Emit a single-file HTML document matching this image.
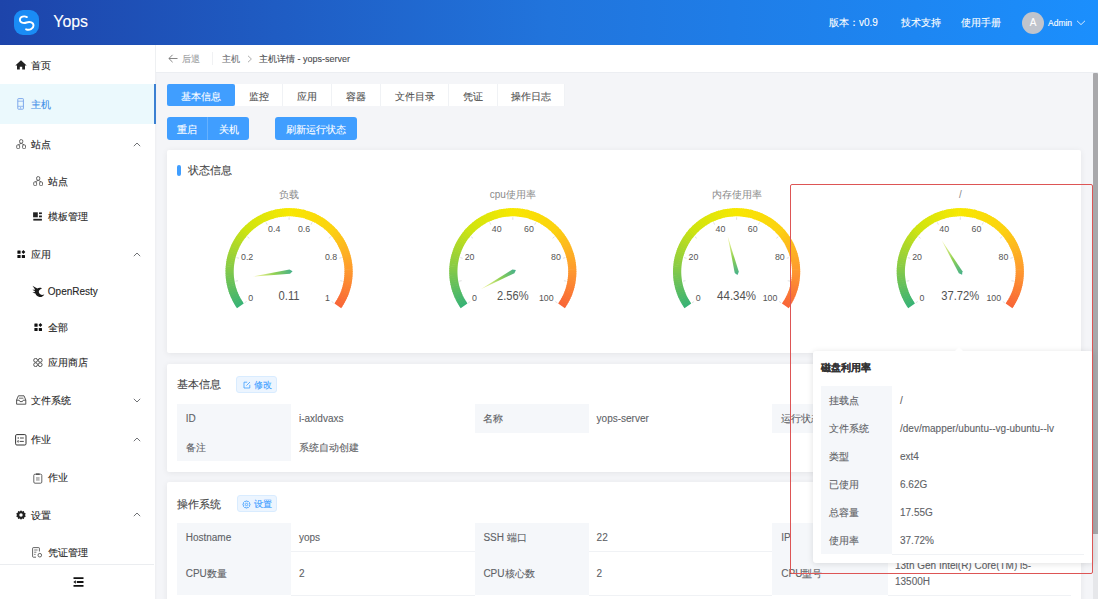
<!DOCTYPE html>
<html><head><meta charset="utf-8">
<style>
*{box-sizing:border-box;margin:0;padding:0}
html,body{width:1098px;height:599px;overflow:hidden}
body{position:relative;background:#f4f5f8;font-family:"Liberation Sans",sans-serif;color:#333;font-size:10px;-webkit-text-stroke-width:0.1px}
.abs{position:absolute;white-space:nowrap;line-height:1}
#hdr{position:absolute;left:0;top:0;width:1098px;height:44.8px;background:linear-gradient(90deg,#1d44aa 0%,#2174dc 50%,#1b8ffd 100%)}
#logo{position:absolute;left:14.25px;top:9.5px;width:24.5px;height:25.5px;border-radius:9px;background:#1a8cf5}
#side{position:absolute;left:0;top:44.8px;width:155.2px;height:555px;background:#fff;box-shadow:1px 0 2px rgba(0,0,0,0.03)}
.mi{position:absolute;left:0;width:154px;font-size:10.5px;color:#303133}
.mi span{position:absolute;white-space:nowrap;line-height:1}
#crumb{position:absolute;left:155.2px;top:44.8px;width:943px;height:28.2px;background:#fff;border-bottom:1px solid #eceef2;border-left:1px solid #eef0f2}
.card{position:absolute;left:167px;width:914px;background:#fff;border-radius:2px;box-shadow:0 1px 6px rgba(0,0,0,0.07)}
.gsvg{position:absolute;left:0;top:0;-webkit-text-stroke-width:0}
.gl{font-size:9.8px;fill:#555;font-family:"Liberation Sans",sans-serif}
.gv{font-size:12.5px;fill:#525252;font-family:"Liberation Sans",sans-serif}
.gt{font-size:10px;fill:#8a8a8a;font-family:"Liberation Sans",sans-serif}
.tab{position:absolute;top:84px;height:22px;background:#fff;color:#505050;font-size:10px;text-align:center;line-height:22px;padding-top:1.5px;border-right:1px solid #f0f2f5}
.btn{position:absolute;top:117px;height:22.5px;background:#409eff;color:#fff;font-size:10px;text-align:center;line-height:22.5px;padding-top:1.5px}
.tbl{position:absolute;border-collapse:collapse;font-size:10px;color:#555}
.lab{background:#f5f7fa}
.sbtn{position:absolute;height:17px;background:#ecf5ff;border:1px solid #d9ecff;color:#409eff;border-radius:3px;font-size:9px;line-height:15px;text-align:center}
</style></head><body>
<div id="hdr">
  <div id="logo"><svg width="25" height="25" viewBox="0 0 25 25"><path d="M12.9 7.1C10.4 5.6 6 6.4 5.9 9.6C5.8 12.6 9.4 13.6 12.6 12.5C15.8 11.4 19.6 12.4 19.5 15.6C19.4 18.8 15.4 20.6 12.1 19.3" stroke="#fff" stroke-width="1.9" fill="none" stroke-linecap="round"/></svg></div>
  <div class="abs" style="left:53.3px;top:14.2px;font-size:15.9px;color:#fff">Yops</div>
  <div class="abs" style="left:829px;top:17.8px;font-size:10px;color:#fff">版本：v0.9</div>
  <div class="abs" style="left:901px;top:17.8px;font-size:10px;color:#fff">技术支持</div>
  <div class="abs" style="left:961px;top:17.8px;font-size:10px;color:#fff">使用手册</div>
  <div style="position:absolute;left:1022px;top:11.5px;width:22px;height:22px;border-radius:50%;background:#c0c4cc;color:#fff;font-size:10px;text-align:center;line-height:22px">A</div>
  <div class="abs" style="left:1048px;top:18.5px;font-size:8.5px;color:#fff">Admin</div>
  <svg style="position:absolute;left:1076px;top:19px" width="11" height="8" viewBox="0 0 11 8"><path d="M1 1.8L5 5.6L9 1.8" stroke="#fff" stroke-width="0.8" fill="none"/></svg>
</div>

<div id="side">
<div style="position:absolute;left:0;top:39.2px;width:155px;height:40px;background:#ebf9fd"></div>
<div style="position:absolute;left:153.5px;top:39.2px;width:2px;height:40px;background:#3b80d2;z-index:2"></div>
<svg style="position:absolute;left:15px;top:15.200000000000003px" width="12" height="10" viewBox="0 0 12 10"><path d="M6 0.3L0.3 5.6H2V9.6H4.8V6.8H7.2V9.6H10V5.6H11.7Z" fill="#222"/></svg>
<div class="abs" style="left:30.5px;top:16.50px;font-size:10px;color:#262626;">首页</div>
<svg style="position:absolute;left:16.5px;top:53.2px" width="8" height="12" viewBox="0 0 8 12"><rect x="0.8" y="0.6" width="5.6" height="10.6" rx="0.6" stroke="#7ea8ec" stroke-width="1" fill="none"/><line x1="0.8" y1="3.2" x2="6.4" y2="3.2" stroke="#7ea8ec" stroke-width="0.8"/><line x1="0.8" y1="8.3" x2="6.4" y2="8.3" stroke="#7ea8ec" stroke-width="0.8"/><line x1="3.6" y1="9" x2="3.6" y2="10.6" stroke="#7ea8ec" stroke-width="0.8"/></svg>
<div class="abs" style="left:30.5px;top:55.50px;font-size:10px;color:#3f8ee8;">主机</div>
<svg style="position:absolute;left:15.5px;top:94.2px" width="10" height="10" viewBox="0 0 10 10"><g stroke="#505050" stroke-width="0.85" fill="none"><rect x="3.6" y="0.6" width="3.2" height="3.7" rx="1.4"/><rect x="0.7" y="5.9" width="2.9" height="3.7" rx="0.9"/><rect x="6.6" y="5.9" width="2.9" height="3.7" rx="0.9"/><path d="M5.2 4.3L2.2 5.9M5.2 4.3L8.1 5.9"/></g></svg>
<div class="abs" style="left:30.5px;top:95.00px;font-size:10px;color:#262626;">站点</div>
<svg style="position:absolute;left:133px;top:97.0px" width="8" height="5" viewBox="0 0 8 5"><path d="M0.8 4.2L4 1L7.2 4.2" stroke="#606266" stroke-width="0.9" fill="none"/></svg>
<svg style="position:absolute;left:32.5px;top:131.7px" width="10" height="10" viewBox="0 0 10 10"><g stroke="#505050" stroke-width="0.85" fill="none"><rect x="3.6" y="0.6" width="3.2" height="3.7" rx="1.4"/><rect x="0.7" y="5.9" width="2.9" height="3.7" rx="0.9"/><rect x="6.6" y="5.9" width="2.9" height="3.7" rx="0.9"/><path d="M5.2 4.3L2.2 5.9M5.2 4.3L8.1 5.9"/></g></svg>
<div class="abs" style="left:47.5px;top:132.50px;font-size:10px;color:#262626;">站点</div>
<svg style="position:absolute;left:33px;top:167.7px" width="10" height="10" viewBox="0 0 10 10"><rect x="0.1" y="0.3" width="4.7" height="5" fill="#222"/><rect x="6" y="0.4" width="2.9" height="1.7" fill="#222"/><rect x="6" y="3.5" width="2.9" height="1.8" fill="#222"/><rect x="0.3" y="6.8" width="8.6" height="1.8" fill="#222"/></svg>
<div class="abs" style="left:47.5px;top:167.50px;font-size:10px;color:#262626;">模板管理</div>
<svg style="position:absolute;left:16.5px;top:205.2px" width="9" height="9" viewBox="0 0 9 9"><rect x="0.4" y="0.5" width="3.2" height="3.2" rx="0.5" fill="#111"/><path d="M6.4 0.1L8.3 2.1L6.4 4.1L4.5 2.1Z" fill="#111"/><rect x="0.4" y="4.9" width="3.2" height="3.2" rx="0.5" fill="#111"/><rect x="4.8" y="4.9" width="3.2" height="3.2" rx="0.5" fill="#111"/></svg>
<div class="abs" style="left:30.5px;top:205.50px;font-size:10px;color:#262626;">应用</div>
<svg style="position:absolute;left:133px;top:207.0px" width="8" height="5" viewBox="0 0 8 5"><path d="M0.8 4.2L4 1L7.2 4.2" stroke="#606266" stroke-width="0.9" fill="none"/></svg>
<svg style="position:absolute;left:31.5px;top:240.7px" width="13" height="13" viewBox="0 0 13 13"><path d="M0.5 0.8C2.5 2 3.6 2.6 5.2 3.4C6.6 2.8 8.6 2.6 10 3.4C8.4 3.8 7 5 6.8 6.6C6.7 8.4 8.2 9.8 10 10C11 10 11.8 9.6 12.3 9.2C11.6 11.2 9.6 12.2 7.6 12C5.4 11.7 4 10.2 3.4 8.6C2.4 8.4 1.4 8 0.4 7.6C1.4 7.4 2.2 7.2 2.9 7C2.8 6.6 2.8 6.3 2.9 5.9C2 5.7 1.2 5.3 0.4 4.8C1.4 4.8 2.3 4.8 3.2 4.8C2.4 3.6 1.4 2.3 0.5 0.8Z" fill="#1a1a1a"/></svg>
<div class="abs" style="left:47.8px;top:242.50px;font-size:10px;color:#262626;">OpenResty</div>
<svg style="position:absolute;left:33.5px;top:278.4px" width="9" height="9" viewBox="0 0 9 9"><rect x="0.4" y="0.5" width="3.2" height="3.2" rx="0.5" fill="#111"/><path d="M6.4 0.1L8.3 2.1L6.4 4.1L4.5 2.1Z" fill="#111"/><rect x="0.4" y="4.9" width="3.2" height="3.2" rx="0.5" fill="#111"/><rect x="4.8" y="4.9" width="3.2" height="3.2" rx="0.5" fill="#111"/></svg>
<div class="abs" style="left:47.5px;top:278.00px;font-size:10px;color:#262626;">全部</div>
<svg style="position:absolute;left:32.5px;top:313.2px" width="10" height="9" viewBox="0 0 10 9"><circle cx="2.6" cy="2.3" r="1.9" stroke="#444" stroke-width="0.9" fill="none"/><circle cx="7.2" cy="2.3" r="1.9" stroke="#444" stroke-width="0.9" fill="none"/><circle cx="2.6" cy="6.7" r="1.9" stroke="#444" stroke-width="0.9" fill="none"/><circle cx="7.2" cy="6.7" r="1.9" stroke="#444" stroke-width="0.9" fill="none"/></svg>
<div class="abs" style="left:47.5px;top:313.00px;font-size:10px;color:#262626;">应用商店</div>
<svg style="position:absolute;left:15.5px;top:350.7px" width="11" height="10" viewBox="0 0 11 10"><path d="M0.6 5V9.2H9.8V5L8 0.8H2.4Z" stroke="#444" stroke-width="0.9" fill="none"/><path d="M0.6 5.2H3.2L4 6.6H6.4L7.2 5.2H9.8" stroke="#444" stroke-width="0.9" fill="none"/><path d="M3 3.2H7.4" stroke="#444" stroke-width="0.8"/></svg>
<div class="abs" style="left:30.5px;top:351.00px;font-size:10px;color:#262626;">文件系统</div>
<svg style="position:absolute;left:133px;top:353.7px" width="8" height="5" viewBox="0 0 8 5"><path d="M0.8 0.8L4 4L7.2 0.8" stroke="#606266" stroke-width="0.9" fill="none"/></svg>
<svg style="position:absolute;left:14.5px;top:389.5px" width="12" height="12" viewBox="0 0 12 12"><rect x="0.6" y="0.6" width="10.4" height="10.4" rx="1.2" stroke="#333" stroke-width="1" fill="none"/><circle cx="3.2" cy="4" r="0.7" fill="#333"/><circle cx="3.2" cy="7.4" r="0.8" stroke="#333" stroke-width="0.7" fill="none"/><path d="M5 4H8.8M5 7.4H8.8" stroke="#333" stroke-width="0.9"/></svg>
<div class="abs" style="left:30.5px;top:390.50px;font-size:10px;color:#262626;">作业</div>
<svg style="position:absolute;left:133px;top:392.0px" width="8" height="5" viewBox="0 0 8 5"><path d="M0.8 4.2L4 1L7.2 4.2" stroke="#606266" stroke-width="0.9" fill="none"/></svg>
<svg style="position:absolute;left:32.5px;top:428.2px" width="10" height="11" viewBox="0 0 10 11"><rect x="0.8" y="1.2" width="8" height="9" rx="1.2" stroke="#555" stroke-width="0.9" fill="none"/><rect x="3" y="0.4" width="3.6" height="1.6" fill="#555"/><rect x="3" y="4" width="3.6" height="3.8" fill="#bbb"/></svg>
<div class="abs" style="left:47.5px;top:428.50px;font-size:10px;color:#262626;">作业</div>
<svg style="position:absolute;left:15.5px;top:465.7px" width="10" height="10" viewBox="0 0 10 10"><path d="M5 0.2L6.2 1.4L7.9 1L8.3 2.7L9.8 3.6L9 5L9.8 6.4L8.3 7.3L7.9 9L6.2 8.6L5 9.8L3.8 8.6L2.1 9L1.7 7.3L0.2 6.4L1 5L0.2 3.6L1.7 2.7L2.1 1L3.8 1.4Z" fill="#222"/><circle cx="5" cy="5" r="1.7" fill="#fff"/></svg>
<div class="abs" style="left:30.5px;top:466.00px;font-size:10px;color:#262626;">设置</div>
<svg style="position:absolute;left:133px;top:467.5px" width="8" height="5" viewBox="0 0 8 5"><path d="M0.8 4.2L4 1L7.2 4.2" stroke="#606266" stroke-width="0.9" fill="none"/></svg>
<svg style="position:absolute;left:32px;top:502.2px" width="11" height="11" viewBox="0 0 11 11"><path d="M7.4 4.5V1.2C7.4 0.9 7.2 0.6 6.8 0.6H1.2C0.9 0.6 0.6 0.9 0.6 1.2V9.6C0.6 9.9 0.9 10.2 1.2 10.2H4" stroke="#555" stroke-width="0.9" fill="none"/><path d="M2.2 3H5.6M2.2 5.2H4.4M2.2 7.4H3.6" stroke="#555" stroke-width="0.8"/><circle cx="7.8" cy="8.2" r="1.8" stroke="#555" stroke-width="0.9" fill="none"/></svg>
<div class="abs" style="left:47.5px;top:503.00px;font-size:10px;color:#262626;">凭证管理</div>
<div style="position:absolute;left:0;top:519.2px;width:154px;height:1px;background:#ebedf0"></div>
<svg style="position:absolute;left:72.5px;top:532.4000000000001px" width="11" height="10" viewBox="0 0 11 10"><path d="M0.5 1.1H10.5M3.8 5H10.5M0.5 8.9H10.5" stroke="#111" stroke-width="1.9"/><path d="M0.3 5L2.8 3.2V6.8Z" fill="#111"/></svg>
</div>

<div id="crumb"></div>
<svg style="position:absolute;left:168px;top:54.2px" width="10" height="9" viewBox="0 0 10 9"><path d="M9.5 4.5H1M4.6 0.8L0.9 4.5L4.6 8.2" stroke="#808080" stroke-width="0.95" fill="none"/></svg>
<div class="abs" style="left:181.5px;top:54.70px;font-size:9px;color:#9a9ca0">后退</div>
<div style="position:absolute;left:211.5px;top:52px;width:1px;height:13px;background:#f0f1f3"></div>
<div class="abs" style="left:221.5px;top:54.70px;font-size:9px;color:#707276">主机</div>
<svg style="position:absolute;left:246.8px;top:55px" width="6" height="8" viewBox="0 0 6 8"><path d="M1 0.8L4.4 4L1 7.2" stroke="#999" stroke-width="0.8" fill="none"/></svg>
<div class="abs" style="left:259px;top:54.70px;font-size:9px;color:#4a4c50">主机详情 - yops-server</div>

<div class="tab" style="left:167px;width:68px;background:#409eff;color:#fff;border-right:none;border-radius:2px">基本信息</div>
<div class="tab" style="left:235px;width:48px;">监控</div>
<div class="tab" style="left:283px;width:49px;">应用</div>
<div class="tab" style="left:332px;width:49px;">容器</div>
<div class="tab" style="left:381px;width:68px;">文件目录</div>
<div class="tab" style="left:449px;width:49px;">凭证</div>
<div class="tab" style="left:498px;width:67px;">操作日志</div>
<div class="btn" style="left:166.5px;width:40.5px;border-radius:3px 0 0 3px">重启</div>
<div style="position:absolute;left:207px;top:117px;width:1px;height:22.5px;background:#66b1ff"></div>
<div class="btn" style="left:208px;width:41px;border-radius:0 3px 3px 0">关机</div>
<div class="btn" style="left:275px;width:81.5px;border-radius:3px">刷新运行状态</div>

<div class="card" style="top:149.8px;height:202.8px"></div>
<div class="card" style="top:363.8px;height:108.2px"></div>
<div class="card" style="top:482.3px;height:130px"></div>

<svg class="gsvg" width="1098" height="599" viewBox="0 0 1098 599"><path d="M240.36 305.83A59.5 59.5 0 0 1 238.82 303.51" stroke="#39b375" stroke-width="8.2" fill="none"/>
<path d="M239.15 304.03A59.5 59.5 0 0 1 237.69 301.66" stroke="#3eb472" stroke-width="8.2" fill="none"/>
<path d="M238.01 302.20A59.5 59.5 0 0 1 236.64 299.77" stroke="#42b570" stroke-width="8.2" fill="none"/>
<path d="M236.93 300.32A59.5 59.5 0 0 1 235.65 297.85" stroke="#46b76d" stroke-width="8.2" fill="none"/>
<path d="M235.93 298.40A59.5 59.5 0 0 1 234.74 295.89" stroke="#4bb86b" stroke-width="8.2" fill="none"/>
<path d="M234.99 296.45A59.5 59.5 0 0 1 233.89 293.89" stroke="#4fb968" stroke-width="8.2" fill="none"/>
<path d="M234.13 294.47A59.5 59.5 0 0 1 233.12 291.87" stroke="#53bb66" stroke-width="8.2" fill="none"/>
<path d="M233.34 292.46A59.5 59.5 0 0 1 232.43 289.82" stroke="#58bc63" stroke-width="8.2" fill="none"/>
<path d="M232.62 290.42A59.5 59.5 0 0 1 231.81 287.75" stroke="#5cbd61" stroke-width="8.2" fill="none"/>
<path d="M231.98 288.35A59.5 59.5 0 0 1 231.26 285.66" stroke="#60be5e" stroke-width="8.2" fill="none"/>
<path d="M231.41 286.26A59.5 59.5 0 0 1 230.79 283.55" stroke="#65c05c" stroke-width="8.2" fill="none"/>
<path d="M230.92 284.16A59.5 59.5 0 0 1 230.40 281.42" stroke="#69c159" stroke-width="8.2" fill="none"/>
<path d="M230.50 282.03A59.5 59.5 0 0 1 230.08 279.28" stroke="#6dc257" stroke-width="8.2" fill="none"/>
<path d="M230.17 279.90A59.5 59.5 0 0 1 229.85 277.13" stroke="#72c454" stroke-width="8.2" fill="none"/>
<path d="M229.91 277.75A59.5 59.5 0 0 1 229.69 274.97" stroke="#76c552" stroke-width="8.2" fill="none"/>
<path d="M229.73 275.59A59.5 59.5 0 0 1 229.61 272.81" stroke="#7ac64f" stroke-width="8.2" fill="none"/>
<path d="M229.63 273.43A59.5 59.5 0 0 1 229.61 270.64" stroke="#7fc84d" stroke-width="8.2" fill="none"/>
<path d="M229.60 271.27A59.5 59.5 0 0 1 229.69 268.48" stroke="#83c94a" stroke-width="8.2" fill="none"/>
<path d="M229.66 269.10A59.5 59.5 0 0 1 229.84 266.32" stroke="#86ca47" stroke-width="8.2" fill="none"/>
<path d="M229.79 266.95A59.5 59.5 0 0 1 230.08 264.17" stroke="#8acc44" stroke-width="8.2" fill="none"/>
<path d="M230.00 264.79A59.5 59.5 0 0 1 230.39 262.03" stroke="#8ecd42" stroke-width="8.2" fill="none"/>
<path d="M230.29 262.65A59.5 59.5 0 0 1 230.78 259.91" stroke="#91ce3f" stroke-width="8.2" fill="none"/>
<path d="M230.66 260.52A59.5 59.5 0 0 1 231.25 257.79" stroke="#95cf3c" stroke-width="8.2" fill="none"/>
<path d="M231.11 258.40A59.5 59.5 0 0 1 231.79 255.70" stroke="#99d139" stroke-width="8.2" fill="none"/>
<path d="M231.63 256.30A59.5 59.5 0 0 1 232.41 253.63" stroke="#9cd236" stroke-width="8.2" fill="none"/>
<path d="M232.23 254.22A59.5 59.5 0 0 1 233.11 251.58" stroke="#a0d333" stroke-width="8.2" fill="none"/>
<path d="M232.90 252.17A59.5 59.5 0 0 1 233.87 249.56" stroke="#a3d531" stroke-width="8.2" fill="none"/>
<path d="M233.65 250.13A59.5 59.5 0 0 1 234.72 247.56" stroke="#a7d62e" stroke-width="8.2" fill="none"/>
<path d="M234.47 248.13A59.5 59.5 0 0 1 235.63 245.60" stroke="#abd72b" stroke-width="8.2" fill="none"/>
<path d="M235.36 246.16A59.5 59.5 0 0 1 236.61 243.67" stroke="#aed828" stroke-width="8.2" fill="none"/>
<path d="M236.32 244.23A59.5 59.5 0 0 1 237.67 241.79" stroke="#b2da25" stroke-width="8.2" fill="none"/>
<path d="M237.36 242.33A59.5 59.5 0 0 1 238.79 239.94" stroke="#b6db22" stroke-width="8.2" fill="none"/>
<path d="M238.46 240.46A59.5 59.5 0 0 1 239.98 238.13" stroke="#b9dc20" stroke-width="8.2" fill="none"/>
<path d="M239.63 238.64A59.5 59.5 0 0 1 241.23 236.36" stroke="#bdde1d" stroke-width="8.2" fill="none"/>
<path d="M240.86 236.87A59.5 59.5 0 0 1 242.55 234.65" stroke="#c1df1a" stroke-width="8.2" fill="none"/>
<path d="M242.16 235.14A59.5 59.5 0 0 1 243.92 232.98" stroke="#c4e017" stroke-width="8.2" fill="none"/>
<path d="M243.52 233.45A59.5 59.5 0 0 1 245.36 231.36" stroke="#c8e214" stroke-width="8.2" fill="none"/>
<path d="M244.94 231.82A59.5 59.5 0 0 1 246.86 229.80" stroke="#cce312" stroke-width="8.2" fill="none"/>
<path d="M246.42 230.24A59.5 59.5 0 0 1 248.41 228.29" stroke="#cfe40f" stroke-width="8.2" fill="none"/>
<path d="M247.95 228.72A59.5 59.5 0 0 1 250.01 226.84" stroke="#d1e40e" stroke-width="8.2" fill="none"/>
<path d="M249.54 227.25A59.5 59.5 0 0 1 251.67 225.45" stroke="#d3e40e" stroke-width="8.2" fill="none"/>
<path d="M251.19 225.84A59.5 59.5 0 0 1 253.37 224.12" stroke="#d5e50d" stroke-width="8.2" fill="none"/>
<path d="M252.88 224.50A59.5 59.5 0 0 1 255.13 222.85" stroke="#d7e50c" stroke-width="8.2" fill="none"/>
<path d="M254.62 223.21A59.5 59.5 0 0 1 256.93 221.65" stroke="#d9e50b" stroke-width="8.2" fill="none"/>
<path d="M256.40 221.99A59.5 59.5 0 0 1 258.77 220.51" stroke="#dbe50b" stroke-width="8.2" fill="none"/>
<path d="M258.23 220.83A59.5 59.5 0 0 1 260.65 219.44" stroke="#dce50a" stroke-width="8.2" fill="none"/>
<path d="M260.10 219.74A59.5 59.5 0 0 1 262.57 218.44" stroke="#dee609" stroke-width="8.2" fill="none"/>
<path d="M262.01 218.72A59.5 59.5 0 0 1 264.52 217.51" stroke="#e0e609" stroke-width="8.2" fill="none"/>
<path d="M263.95 217.77A59.5 59.5 0 0 1 266.51 216.66" stroke="#e2e608" stroke-width="8.2" fill="none"/>
<path d="M265.93 216.90A59.5 59.5 0 0 1 268.52 215.87" stroke="#e4e607" stroke-width="8.2" fill="none"/>
<path d="M267.94 216.09A59.5 59.5 0 0 1 270.57 215.16" stroke="#e6e607" stroke-width="8.2" fill="none"/>
<path d="M269.97 215.36A59.5 59.5 0 0 1 272.63 214.52" stroke="#e8e606" stroke-width="8.2" fill="none"/>
<path d="M272.04 214.70A59.5 59.5 0 0 1 274.72 213.96" stroke="#eae705" stroke-width="8.2" fill="none"/>
<path d="M274.12 214.12A59.5 59.5 0 0 1 276.83 213.48" stroke="#ece705" stroke-width="8.2" fill="none"/>
<path d="M276.22 213.61A59.5 59.5 0 0 1 278.96 213.07" stroke="#eee704" stroke-width="8.2" fill="none"/>
<path d="M278.34 213.18A59.5 59.5 0 0 1 281.09 212.74" stroke="#efe703" stroke-width="8.2" fill="none"/>
<path d="M280.48 212.83A59.5 59.5 0 0 1 283.24 212.49" stroke="#f1e702" stroke-width="8.2" fill="none"/>
<path d="M282.62 212.55A59.5 59.5 0 0 1 285.40 212.32" stroke="#f3e802" stroke-width="8.2" fill="none"/>
<path d="M284.78 212.36A59.5 59.5 0 0 1 287.56 212.22" stroke="#f5e801" stroke-width="8.2" fill="none"/>
<path d="M286.94 212.24A59.5 59.5 0 0 1 289.72 212.20" stroke="#f7e800" stroke-width="8.2" fill="none"/>
<path d="M289.10 212.20A59.5 59.5 0 0 1 291.89 212.27" stroke="#f8e700" stroke-width="8.2" fill="none"/>
<path d="M291.26 212.24A59.5 59.5 0 0 1 294.04 212.41" stroke="#f8e601" stroke-width="8.2" fill="none"/>
<path d="M293.42 212.36A59.5 59.5 0 0 1 296.20 212.62" stroke="#f8e502" stroke-width="8.2" fill="none"/>
<path d="M295.58 212.55A59.5 59.5 0 0 1 298.34 212.92" stroke="#f9e403" stroke-width="8.2" fill="none"/>
<path d="M297.72 212.83A59.5 59.5 0 0 1 300.47 213.30" stroke="#f9e303" stroke-width="8.2" fill="none"/>
<path d="M299.86 213.18A59.5 59.5 0 0 1 302.59 213.75" stroke="#f9e204" stroke-width="8.2" fill="none"/>
<path d="M301.98 213.61A59.5 59.5 0 0 1 304.68 214.28" stroke="#f9e105" stroke-width="8.2" fill="none"/>
<path d="M304.08 214.12A59.5 59.5 0 0 1 306.76 214.88" stroke="#f9e006" stroke-width="8.2" fill="none"/>
<path d="M306.16 214.70A59.5 59.5 0 0 1 308.81 215.56" stroke="#fadf06" stroke-width="8.2" fill="none"/>
<path d="M308.23 215.36A59.5 59.5 0 0 1 310.84 216.31" stroke="#fade07" stroke-width="8.2" fill="none"/>
<path d="M310.26 216.09A59.5 59.5 0 0 1 312.84 217.14" stroke="#fadd08" stroke-width="8.2" fill="none"/>
<path d="M312.27 216.90A59.5 59.5 0 0 1 314.81 218.04" stroke="#fadc09" stroke-width="8.2" fill="none"/>
<path d="M314.25 217.77A59.5 59.5 0 0 1 316.74 219.01" stroke="#fadb09" stroke-width="8.2" fill="none"/>
<path d="M316.19 218.72A59.5 59.5 0 0 1 318.64 220.05" stroke="#fada0a" stroke-width="8.2" fill="none"/>
<path d="M318.10 219.74A59.5 59.5 0 0 1 320.50 221.16" stroke="#fbd90b" stroke-width="8.2" fill="none"/>
<path d="M319.97 220.83A59.5 59.5 0 0 1 322.31 222.33" stroke="#fbd80b" stroke-width="8.2" fill="none"/>
<path d="M321.80 221.99A59.5 59.5 0 0 1 324.09 223.57" stroke="#fbd70c" stroke-width="8.2" fill="none"/>
<path d="M323.58 223.21A59.5 59.5 0 0 1 325.81 224.88" stroke="#fbd60d" stroke-width="8.2" fill="none"/>
<path d="M325.32 224.50A59.5 59.5 0 0 1 327.49 226.24" stroke="#fbd50e" stroke-width="8.2" fill="none"/>
<path d="M327.01 225.84A59.5 59.5 0 0 1 329.12 227.67" stroke="#fcd40e" stroke-width="8.2" fill="none"/>
<path d="M328.66 227.25A59.5 59.5 0 0 1 330.69 229.15" stroke="#fcd30f" stroke-width="8.2" fill="none"/>
<path d="M330.25 228.72A59.5 59.5 0 0 1 332.21 230.69" stroke="#fcd210" stroke-width="8.2" fill="none"/>
<path d="M331.78 230.24A59.5 59.5 0 0 1 333.67 232.29" stroke="#fcd011" stroke-width="8.2" fill="none"/>
<path d="M333.26 231.82A59.5 59.5 0 0 1 335.08 233.93" stroke="#fccd13" stroke-width="8.2" fill="none"/>
<path d="M334.68 233.45A59.5 59.5 0 0 1 336.42 235.63" stroke="#fcca14" stroke-width="8.2" fill="none"/>
<path d="M336.04 235.14A59.5 59.5 0 0 1 337.70 237.37" stroke="#fcc816" stroke-width="8.2" fill="none"/>
<path d="M337.34 236.87A59.5 59.5 0 0 1 338.92 239.16" stroke="#fcc517" stroke-width="8.2" fill="none"/>
<path d="M338.57 238.64A59.5 59.5 0 0 1 340.07 241.00" stroke="#fdc219" stroke-width="8.2" fill="none"/>
<path d="M339.74 240.46A59.5 59.5 0 0 1 341.15 242.87" stroke="#fdbf1a" stroke-width="8.2" fill="none"/>
<path d="M340.84 242.33A59.5 59.5 0 0 1 342.16 244.78" stroke="#fdbd1c" stroke-width="8.2" fill="none"/>
<path d="M341.88 244.23A59.5 59.5 0 0 1 343.11 246.73" stroke="#fdba1d" stroke-width="8.2" fill="none"/>
<path d="M342.84 246.16A59.5 59.5 0 0 1 343.98 248.71" stroke="#fdb71f" stroke-width="8.2" fill="none"/>
<path d="M343.73 248.13A59.5 59.5 0 0 1 344.78 250.72" stroke="#fdb520" stroke-width="8.2" fill="none"/>
<path d="M344.55 250.13A59.5 59.5 0 0 1 345.50 252.75" stroke="#fdb222" stroke-width="8.2" fill="none"/>
<path d="M345.30 252.17A59.5 59.5 0 0 1 346.15 254.82" stroke="#fdaf23" stroke-width="8.2" fill="none"/>
<path d="M345.97 254.22A59.5 59.5 0 0 1 346.73 256.90" stroke="#fdad25" stroke-width="8.2" fill="none"/>
<path d="M346.57 256.30A59.5 59.5 0 0 1 347.23 259.01" stroke="#fdaa26" stroke-width="8.2" fill="none"/>
<path d="M347.09 258.40A59.5 59.5 0 0 1 347.65 261.13" stroke="#fda728" stroke-width="8.2" fill="none"/>
<path d="M347.54 260.52A59.5 59.5 0 0 1 348.00 263.26" stroke="#fea529" stroke-width="8.2" fill="none"/>
<path d="M347.91 262.65A59.5 59.5 0 0 1 348.27 265.41" stroke="#fea22b" stroke-width="8.2" fill="none"/>
<path d="M348.20 264.79A59.5 59.5 0 0 1 348.46 267.57" stroke="#fe9f2c" stroke-width="8.2" fill="none"/>
<path d="M348.41 266.95A59.5 59.5 0 0 1 348.57 269.73" stroke="#fe9d2d" stroke-width="8.2" fill="none"/>
<path d="M348.54 269.10A59.5 59.5 0 0 1 348.60 271.89" stroke="#fe9a2f" stroke-width="8.2" fill="none"/>
<path d="M348.60 271.27A59.5 59.5 0 0 1 348.55 274.05" stroke="#fe9730" stroke-width="8.2" fill="none"/>
<path d="M348.57 273.43A59.5 59.5 0 0 1 348.43 276.21" stroke="#fe9431" stroke-width="8.2" fill="none"/>
<path d="M348.47 275.59A59.5 59.5 0 0 1 348.23 278.37" stroke="#fd9131" stroke-width="8.2" fill="none"/>
<path d="M348.29 277.75A59.5 59.5 0 0 1 347.94 280.51" stroke="#fd8e31" stroke-width="8.2" fill="none"/>
<path d="M348.03 279.90A59.5 59.5 0 0 1 347.58 282.65" stroke="#fc8b32" stroke-width="8.2" fill="none"/>
<path d="M347.70 282.03A59.5 59.5 0 0 1 347.15 284.76" stroke="#fc8832" stroke-width="8.2" fill="none"/>
<path d="M347.28 284.16A59.5 59.5 0 0 1 346.63 286.87" stroke="#fc8433" stroke-width="8.2" fill="none"/>
<path d="M346.79 286.26A59.5 59.5 0 0 1 346.05 288.95" stroke="#fb8133" stroke-width="8.2" fill="none"/>
<path d="M346.22 288.35A59.5 59.5 0 0 1 345.38 291.01" stroke="#fb7e33" stroke-width="8.2" fill="none"/>
<path d="M345.58 290.42A59.5 59.5 0 0 1 344.64 293.04" stroke="#fb7b34" stroke-width="8.2" fill="none"/>
<path d="M344.86 292.46A59.5 59.5 0 0 1 343.83 295.04" stroke="#fa7834" stroke-width="8.2" fill="none"/>
<path d="M344.07 294.47A59.5 59.5 0 0 1 342.94 297.02" stroke="#fa7535" stroke-width="8.2" fill="none"/>
<path d="M343.21 296.45A59.5 59.5 0 0 1 341.99 298.96" stroke="#fa7235" stroke-width="8.2" fill="none"/>
<path d="M342.27 298.40A59.5 59.5 0 0 1 340.96 300.86" stroke="#f96f36" stroke-width="8.2" fill="none"/>
<path d="M341.27 300.32A59.5 59.5 0 0 1 339.87 302.73" stroke="#f96c36" stroke-width="8.2" fill="none"/>
<path d="M340.19 302.20A59.5 59.5 0 0 1 338.71 304.55" stroke="#f96936" stroke-width="8.2" fill="none"/>
<path d="M339.05 304.03A59.5 59.5 0 0 1 337.84 305.83" stroke="#f86637" stroke-width="8.2" fill="none"/>
<line x1="244.54" y1="302.90" x2="246.59" y2="301.47" stroke="#d8d8d8" stroke-width="0.8"/>
<line x1="235.53" y1="281.15" x2="237.99" y2="280.71" stroke="#d8d8d8" stroke-width="0.8"/>
<line x1="236.55" y1="257.62" x2="238.97" y2="258.27" stroke="#d8d8d8" stroke-width="0.8"/>
<line x1="247.43" y1="236.73" x2="249.34" y2="238.34" stroke="#d8d8d8" stroke-width="0.8"/>
<line x1="266.11" y1="222.40" x2="267.17" y2="224.66" stroke="#d8d8d8" stroke-width="0.8"/>
<line x1="289.10" y1="217.30" x2="289.10" y2="219.80" stroke="#d8d8d8" stroke-width="0.8"/>
<line x1="312.09" y1="222.40" x2="311.03" y2="224.66" stroke="#d8d8d8" stroke-width="0.8"/>
<line x1="330.77" y1="236.73" x2="328.86" y2="238.34" stroke="#d8d8d8" stroke-width="0.8"/>
<line x1="341.65" y1="257.62" x2="339.23" y2="258.27" stroke="#d8d8d8" stroke-width="0.8"/>
<line x1="342.67" y1="281.15" x2="340.21" y2="280.71" stroke="#d8d8d8" stroke-width="0.8"/>
<line x1="333.66" y1="302.90" x2="331.61" y2="301.47" stroke="#d8d8d8" stroke-width="0.8"/>
<text transform="translate(248.31,297.96) scale(0.9,1)" x="0" y="0" text-anchor="start" dominant-baseline="central" class="gl">0</text>
<text transform="translate(241.00,256.71) scale(0.9,1)" x="0" y="0" text-anchor="start" dominant-baseline="central" class="gl">0.2</text>
<text transform="translate(268.05,225.17) scale(0.9,1)" x="0" y="0" text-anchor="start" dominant-baseline="hanging" class="gl">0.4</text>
<text transform="translate(310.15,225.17) scale(0.9,1)" x="0" y="0" text-anchor="end" dominant-baseline="hanging" class="gl">0.6</text>
<text transform="translate(337.20,256.71) scale(0.9,1)" x="0" y="0" text-anchor="end" dominant-baseline="central" class="gl">0.8</text>
<text transform="translate(329.89,297.96) scale(0.9,1)" x="0" y="0" text-anchor="end" dominant-baseline="central" class="gl">1</text>
<defs><linearGradient id="pg1" gradientUnits="userSpaceOnUse" x1="252.91" y1="276.46" x2="292.57" y2="271.24"><stop offset="0" stop-color="#e4ea50" stop-opacity="0.5"/><stop offset="0.55" stop-color="#8fd052"/><stop offset="1" stop-color="#45b08c"/></linearGradient></defs>
<path d="M252.91 276.46L289.52 269.53L292.57 271.24L290.07 273.69Z" fill="url(#pg1)"/>
<text x="289.10" y="295.80" text-anchor="middle" dominant-baseline="central" class="gv" textLength="21" lengthAdjust="spacingAndGlyphs">0.11</text>
<text x="289.10" y="194.70" text-anchor="middle" dominant-baseline="central" class="gt">负载</text>
<path d="M464.06 305.83A59.5 59.5 0 0 1 462.52 303.51" stroke="#39b375" stroke-width="8.2" fill="none"/>
<path d="M462.85 304.03A59.5 59.5 0 0 1 461.39 301.66" stroke="#3eb472" stroke-width="8.2" fill="none"/>
<path d="M461.71 302.20A59.5 59.5 0 0 1 460.34 299.77" stroke="#42b570" stroke-width="8.2" fill="none"/>
<path d="M460.63 300.32A59.5 59.5 0 0 1 459.35 297.85" stroke="#46b76d" stroke-width="8.2" fill="none"/>
<path d="M459.63 298.40A59.5 59.5 0 0 1 458.44 295.89" stroke="#4bb86b" stroke-width="8.2" fill="none"/>
<path d="M458.69 296.45A59.5 59.5 0 0 1 457.59 293.89" stroke="#4fb968" stroke-width="8.2" fill="none"/>
<path d="M457.83 294.47A59.5 59.5 0 0 1 456.82 291.87" stroke="#53bb66" stroke-width="8.2" fill="none"/>
<path d="M457.04 292.46A59.5 59.5 0 0 1 456.13 289.82" stroke="#58bc63" stroke-width="8.2" fill="none"/>
<path d="M456.32 290.42A59.5 59.5 0 0 1 455.51 287.75" stroke="#5cbd61" stroke-width="8.2" fill="none"/>
<path d="M455.68 288.35A59.5 59.5 0 0 1 454.96 285.66" stroke="#60be5e" stroke-width="8.2" fill="none"/>
<path d="M455.11 286.26A59.5 59.5 0 0 1 454.49 283.55" stroke="#65c05c" stroke-width="8.2" fill="none"/>
<path d="M454.62 284.16A59.5 59.5 0 0 1 454.10 281.42" stroke="#69c159" stroke-width="8.2" fill="none"/>
<path d="M454.20 282.03A59.5 59.5 0 0 1 453.78 279.28" stroke="#6dc257" stroke-width="8.2" fill="none"/>
<path d="M453.87 279.90A59.5 59.5 0 0 1 453.55 277.13" stroke="#72c454" stroke-width="8.2" fill="none"/>
<path d="M453.61 277.75A59.5 59.5 0 0 1 453.39 274.97" stroke="#76c552" stroke-width="8.2" fill="none"/>
<path d="M453.43 275.59A59.5 59.5 0 0 1 453.31 272.81" stroke="#7ac64f" stroke-width="8.2" fill="none"/>
<path d="M453.33 273.43A59.5 59.5 0 0 1 453.31 270.64" stroke="#7fc84d" stroke-width="8.2" fill="none"/>
<path d="M453.30 271.27A59.5 59.5 0 0 1 453.39 268.48" stroke="#83c94a" stroke-width="8.2" fill="none"/>
<path d="M453.36 269.10A59.5 59.5 0 0 1 453.54 266.32" stroke="#86ca47" stroke-width="8.2" fill="none"/>
<path d="M453.49 266.95A59.5 59.5 0 0 1 453.78 264.17" stroke="#8acc44" stroke-width="8.2" fill="none"/>
<path d="M453.70 264.79A59.5 59.5 0 0 1 454.09 262.03" stroke="#8ecd42" stroke-width="8.2" fill="none"/>
<path d="M453.99 262.65A59.5 59.5 0 0 1 454.48 259.91" stroke="#91ce3f" stroke-width="8.2" fill="none"/>
<path d="M454.36 260.52A59.5 59.5 0 0 1 454.95 257.79" stroke="#95cf3c" stroke-width="8.2" fill="none"/>
<path d="M454.81 258.40A59.5 59.5 0 0 1 455.49 255.70" stroke="#99d139" stroke-width="8.2" fill="none"/>
<path d="M455.33 256.30A59.5 59.5 0 0 1 456.11 253.63" stroke="#9cd236" stroke-width="8.2" fill="none"/>
<path d="M455.93 254.22A59.5 59.5 0 0 1 456.81 251.58" stroke="#a0d333" stroke-width="8.2" fill="none"/>
<path d="M456.60 252.17A59.5 59.5 0 0 1 457.57 249.56" stroke="#a3d531" stroke-width="8.2" fill="none"/>
<path d="M457.35 250.13A59.5 59.5 0 0 1 458.42 247.56" stroke="#a7d62e" stroke-width="8.2" fill="none"/>
<path d="M458.17 248.13A59.5 59.5 0 0 1 459.33 245.60" stroke="#abd72b" stroke-width="8.2" fill="none"/>
<path d="M459.06 246.16A59.5 59.5 0 0 1 460.31 243.67" stroke="#aed828" stroke-width="8.2" fill="none"/>
<path d="M460.02 244.23A59.5 59.5 0 0 1 461.37 241.79" stroke="#b2da25" stroke-width="8.2" fill="none"/>
<path d="M461.06 242.33A59.5 59.5 0 0 1 462.49 239.94" stroke="#b6db22" stroke-width="8.2" fill="none"/>
<path d="M462.16 240.46A59.5 59.5 0 0 1 463.68 238.13" stroke="#b9dc20" stroke-width="8.2" fill="none"/>
<path d="M463.33 238.64A59.5 59.5 0 0 1 464.93 236.36" stroke="#bdde1d" stroke-width="8.2" fill="none"/>
<path d="M464.56 236.87A59.5 59.5 0 0 1 466.25 234.65" stroke="#c1df1a" stroke-width="8.2" fill="none"/>
<path d="M465.86 235.14A59.5 59.5 0 0 1 467.62 232.98" stroke="#c4e017" stroke-width="8.2" fill="none"/>
<path d="M467.22 233.45A59.5 59.5 0 0 1 469.06 231.36" stroke="#c8e214" stroke-width="8.2" fill="none"/>
<path d="M468.64 231.82A59.5 59.5 0 0 1 470.56 229.80" stroke="#cce312" stroke-width="8.2" fill="none"/>
<path d="M470.12 230.24A59.5 59.5 0 0 1 472.11 228.29" stroke="#cfe40f" stroke-width="8.2" fill="none"/>
<path d="M471.65 228.72A59.5 59.5 0 0 1 473.71 226.84" stroke="#d1e40e" stroke-width="8.2" fill="none"/>
<path d="M473.24 227.25A59.5 59.5 0 0 1 475.37 225.45" stroke="#d3e40e" stroke-width="8.2" fill="none"/>
<path d="M474.89 225.84A59.5 59.5 0 0 1 477.07 224.12" stroke="#d5e50d" stroke-width="8.2" fill="none"/>
<path d="M476.58 224.50A59.5 59.5 0 0 1 478.83 222.85" stroke="#d7e50c" stroke-width="8.2" fill="none"/>
<path d="M478.32 223.21A59.5 59.5 0 0 1 480.63 221.65" stroke="#d9e50b" stroke-width="8.2" fill="none"/>
<path d="M480.10 221.99A59.5 59.5 0 0 1 482.47 220.51" stroke="#dbe50b" stroke-width="8.2" fill="none"/>
<path d="M481.93 220.83A59.5 59.5 0 0 1 484.35 219.44" stroke="#dce50a" stroke-width="8.2" fill="none"/>
<path d="M483.80 219.74A59.5 59.5 0 0 1 486.27 218.44" stroke="#dee609" stroke-width="8.2" fill="none"/>
<path d="M485.71 218.72A59.5 59.5 0 0 1 488.22 217.51" stroke="#e0e609" stroke-width="8.2" fill="none"/>
<path d="M487.65 217.77A59.5 59.5 0 0 1 490.21 216.66" stroke="#e2e608" stroke-width="8.2" fill="none"/>
<path d="M489.63 216.90A59.5 59.5 0 0 1 492.22 215.87" stroke="#e4e607" stroke-width="8.2" fill="none"/>
<path d="M491.64 216.09A59.5 59.5 0 0 1 494.27 215.16" stroke="#e6e607" stroke-width="8.2" fill="none"/>
<path d="M493.67 215.36A59.5 59.5 0 0 1 496.33 214.52" stroke="#e8e606" stroke-width="8.2" fill="none"/>
<path d="M495.74 214.70A59.5 59.5 0 0 1 498.42 213.96" stroke="#eae705" stroke-width="8.2" fill="none"/>
<path d="M497.82 214.12A59.5 59.5 0 0 1 500.53 213.48" stroke="#ece705" stroke-width="8.2" fill="none"/>
<path d="M499.92 213.61A59.5 59.5 0 0 1 502.66 213.07" stroke="#eee704" stroke-width="8.2" fill="none"/>
<path d="M502.04 213.18A59.5 59.5 0 0 1 504.79 212.74" stroke="#efe703" stroke-width="8.2" fill="none"/>
<path d="M504.18 212.83A59.5 59.5 0 0 1 506.94 212.49" stroke="#f1e702" stroke-width="8.2" fill="none"/>
<path d="M506.32 212.55A59.5 59.5 0 0 1 509.10 212.32" stroke="#f3e802" stroke-width="8.2" fill="none"/>
<path d="M508.48 212.36A59.5 59.5 0 0 1 511.26 212.22" stroke="#f5e801" stroke-width="8.2" fill="none"/>
<path d="M510.64 212.24A59.5 59.5 0 0 1 513.42 212.20" stroke="#f7e800" stroke-width="8.2" fill="none"/>
<path d="M512.80 212.20A59.5 59.5 0 0 1 515.59 212.27" stroke="#f8e700" stroke-width="8.2" fill="none"/>
<path d="M514.96 212.24A59.5 59.5 0 0 1 517.74 212.41" stroke="#f8e601" stroke-width="8.2" fill="none"/>
<path d="M517.12 212.36A59.5 59.5 0 0 1 519.90 212.62" stroke="#f8e502" stroke-width="8.2" fill="none"/>
<path d="M519.28 212.55A59.5 59.5 0 0 1 522.04 212.92" stroke="#f9e403" stroke-width="8.2" fill="none"/>
<path d="M521.42 212.83A59.5 59.5 0 0 1 524.17 213.30" stroke="#f9e303" stroke-width="8.2" fill="none"/>
<path d="M523.56 213.18A59.5 59.5 0 0 1 526.29 213.75" stroke="#f9e204" stroke-width="8.2" fill="none"/>
<path d="M525.68 213.61A59.5 59.5 0 0 1 528.38 214.28" stroke="#f9e105" stroke-width="8.2" fill="none"/>
<path d="M527.78 214.12A59.5 59.5 0 0 1 530.46 214.88" stroke="#f9e006" stroke-width="8.2" fill="none"/>
<path d="M529.86 214.70A59.5 59.5 0 0 1 532.51 215.56" stroke="#fadf06" stroke-width="8.2" fill="none"/>
<path d="M531.93 215.36A59.5 59.5 0 0 1 534.54 216.31" stroke="#fade07" stroke-width="8.2" fill="none"/>
<path d="M533.96 216.09A59.5 59.5 0 0 1 536.54 217.14" stroke="#fadd08" stroke-width="8.2" fill="none"/>
<path d="M535.97 216.90A59.5 59.5 0 0 1 538.51 218.04" stroke="#fadc09" stroke-width="8.2" fill="none"/>
<path d="M537.95 217.77A59.5 59.5 0 0 1 540.44 219.01" stroke="#fadb09" stroke-width="8.2" fill="none"/>
<path d="M539.89 218.72A59.5 59.5 0 0 1 542.34 220.05" stroke="#fada0a" stroke-width="8.2" fill="none"/>
<path d="M541.80 219.74A59.5 59.5 0 0 1 544.20 221.16" stroke="#fbd90b" stroke-width="8.2" fill="none"/>
<path d="M543.67 220.83A59.5 59.5 0 0 1 546.01 222.33" stroke="#fbd80b" stroke-width="8.2" fill="none"/>
<path d="M545.50 221.99A59.5 59.5 0 0 1 547.79 223.57" stroke="#fbd70c" stroke-width="8.2" fill="none"/>
<path d="M547.28 223.21A59.5 59.5 0 0 1 549.51 224.88" stroke="#fbd60d" stroke-width="8.2" fill="none"/>
<path d="M549.02 224.50A59.5 59.5 0 0 1 551.19 226.24" stroke="#fbd50e" stroke-width="8.2" fill="none"/>
<path d="M550.71 225.84A59.5 59.5 0 0 1 552.82 227.67" stroke="#fcd40e" stroke-width="8.2" fill="none"/>
<path d="M552.36 227.25A59.5 59.5 0 0 1 554.39 229.15" stroke="#fcd30f" stroke-width="8.2" fill="none"/>
<path d="M553.95 228.72A59.5 59.5 0 0 1 555.91 230.69" stroke="#fcd210" stroke-width="8.2" fill="none"/>
<path d="M555.48 230.24A59.5 59.5 0 0 1 557.37 232.29" stroke="#fcd011" stroke-width="8.2" fill="none"/>
<path d="M556.96 231.82A59.5 59.5 0 0 1 558.78 233.93" stroke="#fccd13" stroke-width="8.2" fill="none"/>
<path d="M558.38 233.45A59.5 59.5 0 0 1 560.12 235.63" stroke="#fcca14" stroke-width="8.2" fill="none"/>
<path d="M559.74 235.14A59.5 59.5 0 0 1 561.40 237.37" stroke="#fcc816" stroke-width="8.2" fill="none"/>
<path d="M561.04 236.87A59.5 59.5 0 0 1 562.62 239.16" stroke="#fcc517" stroke-width="8.2" fill="none"/>
<path d="M562.27 238.64A59.5 59.5 0 0 1 563.77 241.00" stroke="#fdc219" stroke-width="8.2" fill="none"/>
<path d="M563.44 240.46A59.5 59.5 0 0 1 564.85 242.87" stroke="#fdbf1a" stroke-width="8.2" fill="none"/>
<path d="M564.54 242.33A59.5 59.5 0 0 1 565.86 244.78" stroke="#fdbd1c" stroke-width="8.2" fill="none"/>
<path d="M565.58 244.23A59.5 59.5 0 0 1 566.81 246.73" stroke="#fdba1d" stroke-width="8.2" fill="none"/>
<path d="M566.54 246.16A59.5 59.5 0 0 1 567.68 248.71" stroke="#fdb71f" stroke-width="8.2" fill="none"/>
<path d="M567.43 248.13A59.5 59.5 0 0 1 568.48 250.72" stroke="#fdb520" stroke-width="8.2" fill="none"/>
<path d="M568.25 250.13A59.5 59.5 0 0 1 569.20 252.75" stroke="#fdb222" stroke-width="8.2" fill="none"/>
<path d="M569.00 252.17A59.5 59.5 0 0 1 569.85 254.82" stroke="#fdaf23" stroke-width="8.2" fill="none"/>
<path d="M569.67 254.22A59.5 59.5 0 0 1 570.43 256.90" stroke="#fdad25" stroke-width="8.2" fill="none"/>
<path d="M570.27 256.30A59.5 59.5 0 0 1 570.93 259.01" stroke="#fdaa26" stroke-width="8.2" fill="none"/>
<path d="M570.79 258.40A59.5 59.5 0 0 1 571.35 261.13" stroke="#fda728" stroke-width="8.2" fill="none"/>
<path d="M571.24 260.52A59.5 59.5 0 0 1 571.70 263.26" stroke="#fea529" stroke-width="8.2" fill="none"/>
<path d="M571.61 262.65A59.5 59.5 0 0 1 571.97 265.41" stroke="#fea22b" stroke-width="8.2" fill="none"/>
<path d="M571.90 264.79A59.5 59.5 0 0 1 572.16 267.57" stroke="#fe9f2c" stroke-width="8.2" fill="none"/>
<path d="M572.11 266.95A59.5 59.5 0 0 1 572.27 269.73" stroke="#fe9d2d" stroke-width="8.2" fill="none"/>
<path d="M572.24 269.10A59.5 59.5 0 0 1 572.30 271.89" stroke="#fe9a2f" stroke-width="8.2" fill="none"/>
<path d="M572.30 271.27A59.5 59.5 0 0 1 572.25 274.05" stroke="#fe9730" stroke-width="8.2" fill="none"/>
<path d="M572.27 273.43A59.5 59.5 0 0 1 572.13 276.21" stroke="#fe9431" stroke-width="8.2" fill="none"/>
<path d="M572.17 275.59A59.5 59.5 0 0 1 571.93 278.37" stroke="#fd9131" stroke-width="8.2" fill="none"/>
<path d="M571.99 277.75A59.5 59.5 0 0 1 571.64 280.51" stroke="#fd8e31" stroke-width="8.2" fill="none"/>
<path d="M571.73 279.90A59.5 59.5 0 0 1 571.28 282.65" stroke="#fc8b32" stroke-width="8.2" fill="none"/>
<path d="M571.40 282.03A59.5 59.5 0 0 1 570.85 284.76" stroke="#fc8832" stroke-width="8.2" fill="none"/>
<path d="M570.98 284.16A59.5 59.5 0 0 1 570.33 286.87" stroke="#fc8433" stroke-width="8.2" fill="none"/>
<path d="M570.49 286.26A59.5 59.5 0 0 1 569.75 288.95" stroke="#fb8133" stroke-width="8.2" fill="none"/>
<path d="M569.92 288.35A59.5 59.5 0 0 1 569.08 291.01" stroke="#fb7e33" stroke-width="8.2" fill="none"/>
<path d="M569.28 290.42A59.5 59.5 0 0 1 568.34 293.04" stroke="#fb7b34" stroke-width="8.2" fill="none"/>
<path d="M568.56 292.46A59.5 59.5 0 0 1 567.53 295.04" stroke="#fa7834" stroke-width="8.2" fill="none"/>
<path d="M567.77 294.47A59.5 59.5 0 0 1 566.64 297.02" stroke="#fa7535" stroke-width="8.2" fill="none"/>
<path d="M566.91 296.45A59.5 59.5 0 0 1 565.69 298.96" stroke="#fa7235" stroke-width="8.2" fill="none"/>
<path d="M565.97 298.40A59.5 59.5 0 0 1 564.66 300.86" stroke="#f96f36" stroke-width="8.2" fill="none"/>
<path d="M564.97 300.32A59.5 59.5 0 0 1 563.57 302.73" stroke="#f96c36" stroke-width="8.2" fill="none"/>
<path d="M563.89 302.20A59.5 59.5 0 0 1 562.41 304.55" stroke="#f96936" stroke-width="8.2" fill="none"/>
<path d="M562.75 304.03A59.5 59.5 0 0 1 561.54 305.83" stroke="#f86637" stroke-width="8.2" fill="none"/>
<line x1="468.24" y1="302.90" x2="470.29" y2="301.47" stroke="#d8d8d8" stroke-width="0.8"/>
<line x1="459.23" y1="281.15" x2="461.69" y2="280.71" stroke="#d8d8d8" stroke-width="0.8"/>
<line x1="460.25" y1="257.62" x2="462.67" y2="258.27" stroke="#d8d8d8" stroke-width="0.8"/>
<line x1="471.13" y1="236.73" x2="473.04" y2="238.34" stroke="#d8d8d8" stroke-width="0.8"/>
<line x1="489.81" y1="222.40" x2="490.87" y2="224.66" stroke="#d8d8d8" stroke-width="0.8"/>
<line x1="512.80" y1="217.30" x2="512.80" y2="219.80" stroke="#d8d8d8" stroke-width="0.8"/>
<line x1="535.79" y1="222.40" x2="534.73" y2="224.66" stroke="#d8d8d8" stroke-width="0.8"/>
<line x1="554.47" y1="236.73" x2="552.56" y2="238.34" stroke="#d8d8d8" stroke-width="0.8"/>
<line x1="565.35" y1="257.62" x2="562.93" y2="258.27" stroke="#d8d8d8" stroke-width="0.8"/>
<line x1="566.37" y1="281.15" x2="563.91" y2="280.71" stroke="#d8d8d8" stroke-width="0.8"/>
<line x1="557.36" y1="302.90" x2="555.31" y2="301.47" stroke="#d8d8d8" stroke-width="0.8"/>
<text transform="translate(472.01,297.96) scale(0.9,1)" x="0" y="0" text-anchor="start" dominant-baseline="central" class="gl">0</text>
<text transform="translate(464.70,256.71) scale(0.9,1)" x="0" y="0" text-anchor="start" dominant-baseline="central" class="gl">20</text>
<text transform="translate(491.75,225.17) scale(0.9,1)" x="0" y="0" text-anchor="start" dominant-baseline="hanging" class="gl">40</text>
<text transform="translate(533.85,225.17) scale(0.9,1)" x="0" y="0" text-anchor="end" dominant-baseline="hanging" class="gl">60</text>
<text transform="translate(560.90,256.71) scale(0.9,1)" x="0" y="0" text-anchor="end" dominant-baseline="central" class="gl">80</text>
<text transform="translate(553.59,297.96) scale(0.9,1)" x="0" y="0" text-anchor="end" dominant-baseline="central" class="gl">100</text>
<defs><linearGradient id="pg2" gradientUnits="userSpaceOnUse" x1="480.75" y1="289.17" x2="515.87" y2="270.02"><stop offset="0" stop-color="#e4ea50" stop-opacity="0.5"/><stop offset="0.55" stop-color="#8fd052"/><stop offset="1" stop-color="#45b08c"/></linearGradient></defs>
<path d="M480.75 289.17L512.41 269.52L515.87 270.02L514.42 273.21Z" fill="url(#pg2)"/>
<text x="512.80" y="295.80" text-anchor="middle" dominant-baseline="central" class="gv" textLength="31.5" lengthAdjust="spacingAndGlyphs">2.56%</text>
<text x="512.80" y="194.70" text-anchor="middle" dominant-baseline="central" class="gt">cpu使用率</text>
<path d="M687.86 305.83A59.5 59.5 0 0 1 686.32 303.51" stroke="#39b375" stroke-width="8.2" fill="none"/>
<path d="M686.65 304.03A59.5 59.5 0 0 1 685.19 301.66" stroke="#3eb472" stroke-width="8.2" fill="none"/>
<path d="M685.51 302.20A59.5 59.5 0 0 1 684.14 299.77" stroke="#42b570" stroke-width="8.2" fill="none"/>
<path d="M684.43 300.32A59.5 59.5 0 0 1 683.15 297.85" stroke="#46b76d" stroke-width="8.2" fill="none"/>
<path d="M683.43 298.40A59.5 59.5 0 0 1 682.24 295.89" stroke="#4bb86b" stroke-width="8.2" fill="none"/>
<path d="M682.49 296.45A59.5 59.5 0 0 1 681.39 293.89" stroke="#4fb968" stroke-width="8.2" fill="none"/>
<path d="M681.63 294.47A59.5 59.5 0 0 1 680.62 291.87" stroke="#53bb66" stroke-width="8.2" fill="none"/>
<path d="M680.84 292.46A59.5 59.5 0 0 1 679.93 289.82" stroke="#58bc63" stroke-width="8.2" fill="none"/>
<path d="M680.12 290.42A59.5 59.5 0 0 1 679.31 287.75" stroke="#5cbd61" stroke-width="8.2" fill="none"/>
<path d="M679.48 288.35A59.5 59.5 0 0 1 678.76 285.66" stroke="#60be5e" stroke-width="8.2" fill="none"/>
<path d="M678.91 286.26A59.5 59.5 0 0 1 678.29 283.55" stroke="#65c05c" stroke-width="8.2" fill="none"/>
<path d="M678.42 284.16A59.5 59.5 0 0 1 677.90 281.42" stroke="#69c159" stroke-width="8.2" fill="none"/>
<path d="M678.00 282.03A59.5 59.5 0 0 1 677.58 279.28" stroke="#6dc257" stroke-width="8.2" fill="none"/>
<path d="M677.67 279.90A59.5 59.5 0 0 1 677.35 277.13" stroke="#72c454" stroke-width="8.2" fill="none"/>
<path d="M677.41 277.75A59.5 59.5 0 0 1 677.19 274.97" stroke="#76c552" stroke-width="8.2" fill="none"/>
<path d="M677.23 275.59A59.5 59.5 0 0 1 677.11 272.81" stroke="#7ac64f" stroke-width="8.2" fill="none"/>
<path d="M677.13 273.43A59.5 59.5 0 0 1 677.11 270.64" stroke="#7fc84d" stroke-width="8.2" fill="none"/>
<path d="M677.10 271.27A59.5 59.5 0 0 1 677.19 268.48" stroke="#83c94a" stroke-width="8.2" fill="none"/>
<path d="M677.16 269.10A59.5 59.5 0 0 1 677.34 266.32" stroke="#86ca47" stroke-width="8.2" fill="none"/>
<path d="M677.29 266.95A59.5 59.5 0 0 1 677.58 264.17" stroke="#8acc44" stroke-width="8.2" fill="none"/>
<path d="M677.50 264.79A59.5 59.5 0 0 1 677.89 262.03" stroke="#8ecd42" stroke-width="8.2" fill="none"/>
<path d="M677.79 262.65A59.5 59.5 0 0 1 678.28 259.91" stroke="#91ce3f" stroke-width="8.2" fill="none"/>
<path d="M678.16 260.52A59.5 59.5 0 0 1 678.75 257.79" stroke="#95cf3c" stroke-width="8.2" fill="none"/>
<path d="M678.61 258.40A59.5 59.5 0 0 1 679.29 255.70" stroke="#99d139" stroke-width="8.2" fill="none"/>
<path d="M679.13 256.30A59.5 59.5 0 0 1 679.91 253.63" stroke="#9cd236" stroke-width="8.2" fill="none"/>
<path d="M679.73 254.22A59.5 59.5 0 0 1 680.61 251.58" stroke="#a0d333" stroke-width="8.2" fill="none"/>
<path d="M680.40 252.17A59.5 59.5 0 0 1 681.37 249.56" stroke="#a3d531" stroke-width="8.2" fill="none"/>
<path d="M681.15 250.13A59.5 59.5 0 0 1 682.22 247.56" stroke="#a7d62e" stroke-width="8.2" fill="none"/>
<path d="M681.97 248.13A59.5 59.5 0 0 1 683.13 245.60" stroke="#abd72b" stroke-width="8.2" fill="none"/>
<path d="M682.86 246.16A59.5 59.5 0 0 1 684.11 243.67" stroke="#aed828" stroke-width="8.2" fill="none"/>
<path d="M683.82 244.23A59.5 59.5 0 0 1 685.17 241.79" stroke="#b2da25" stroke-width="8.2" fill="none"/>
<path d="M684.86 242.33A59.5 59.5 0 0 1 686.29 239.94" stroke="#b6db22" stroke-width="8.2" fill="none"/>
<path d="M685.96 240.46A59.5 59.5 0 0 1 687.48 238.13" stroke="#b9dc20" stroke-width="8.2" fill="none"/>
<path d="M687.13 238.64A59.5 59.5 0 0 1 688.73 236.36" stroke="#bdde1d" stroke-width="8.2" fill="none"/>
<path d="M688.36 236.87A59.5 59.5 0 0 1 690.05 234.65" stroke="#c1df1a" stroke-width="8.2" fill="none"/>
<path d="M689.66 235.14A59.5 59.5 0 0 1 691.42 232.98" stroke="#c4e017" stroke-width="8.2" fill="none"/>
<path d="M691.02 233.45A59.5 59.5 0 0 1 692.86 231.36" stroke="#c8e214" stroke-width="8.2" fill="none"/>
<path d="M692.44 231.82A59.5 59.5 0 0 1 694.36 229.80" stroke="#cce312" stroke-width="8.2" fill="none"/>
<path d="M693.92 230.24A59.5 59.5 0 0 1 695.91 228.29" stroke="#cfe40f" stroke-width="8.2" fill="none"/>
<path d="M695.45 228.72A59.5 59.5 0 0 1 697.51 226.84" stroke="#d1e40e" stroke-width="8.2" fill="none"/>
<path d="M697.04 227.25A59.5 59.5 0 0 1 699.17 225.45" stroke="#d3e40e" stroke-width="8.2" fill="none"/>
<path d="M698.69 225.84A59.5 59.5 0 0 1 700.87 224.12" stroke="#d5e50d" stroke-width="8.2" fill="none"/>
<path d="M700.38 224.50A59.5 59.5 0 0 1 702.63 222.85" stroke="#d7e50c" stroke-width="8.2" fill="none"/>
<path d="M702.12 223.21A59.5 59.5 0 0 1 704.43 221.65" stroke="#d9e50b" stroke-width="8.2" fill="none"/>
<path d="M703.90 221.99A59.5 59.5 0 0 1 706.27 220.51" stroke="#dbe50b" stroke-width="8.2" fill="none"/>
<path d="M705.73 220.83A59.5 59.5 0 0 1 708.15 219.44" stroke="#dce50a" stroke-width="8.2" fill="none"/>
<path d="M707.60 219.74A59.5 59.5 0 0 1 710.07 218.44" stroke="#dee609" stroke-width="8.2" fill="none"/>
<path d="M709.51 218.72A59.5 59.5 0 0 1 712.02 217.51" stroke="#e0e609" stroke-width="8.2" fill="none"/>
<path d="M711.45 217.77A59.5 59.5 0 0 1 714.01 216.66" stroke="#e2e608" stroke-width="8.2" fill="none"/>
<path d="M713.43 216.90A59.5 59.5 0 0 1 716.02 215.87" stroke="#e4e607" stroke-width="8.2" fill="none"/>
<path d="M715.44 216.09A59.5 59.5 0 0 1 718.07 215.16" stroke="#e6e607" stroke-width="8.2" fill="none"/>
<path d="M717.47 215.36A59.5 59.5 0 0 1 720.13 214.52" stroke="#e8e606" stroke-width="8.2" fill="none"/>
<path d="M719.54 214.70A59.5 59.5 0 0 1 722.22 213.96" stroke="#eae705" stroke-width="8.2" fill="none"/>
<path d="M721.62 214.12A59.5 59.5 0 0 1 724.33 213.48" stroke="#ece705" stroke-width="8.2" fill="none"/>
<path d="M723.72 213.61A59.5 59.5 0 0 1 726.46 213.07" stroke="#eee704" stroke-width="8.2" fill="none"/>
<path d="M725.84 213.18A59.5 59.5 0 0 1 728.59 212.74" stroke="#efe703" stroke-width="8.2" fill="none"/>
<path d="M727.98 212.83A59.5 59.5 0 0 1 730.74 212.49" stroke="#f1e702" stroke-width="8.2" fill="none"/>
<path d="M730.12 212.55A59.5 59.5 0 0 1 732.90 212.32" stroke="#f3e802" stroke-width="8.2" fill="none"/>
<path d="M732.28 212.36A59.5 59.5 0 0 1 735.06 212.22" stroke="#f5e801" stroke-width="8.2" fill="none"/>
<path d="M734.44 212.24A59.5 59.5 0 0 1 737.22 212.20" stroke="#f7e800" stroke-width="8.2" fill="none"/>
<path d="M736.60 212.20A59.5 59.5 0 0 1 739.39 212.27" stroke="#f8e700" stroke-width="8.2" fill="none"/>
<path d="M738.76 212.24A59.5 59.5 0 0 1 741.54 212.41" stroke="#f8e601" stroke-width="8.2" fill="none"/>
<path d="M740.92 212.36A59.5 59.5 0 0 1 743.70 212.62" stroke="#f8e502" stroke-width="8.2" fill="none"/>
<path d="M743.08 212.55A59.5 59.5 0 0 1 745.84 212.92" stroke="#f9e403" stroke-width="8.2" fill="none"/>
<path d="M745.22 212.83A59.5 59.5 0 0 1 747.97 213.30" stroke="#f9e303" stroke-width="8.2" fill="none"/>
<path d="M747.36 213.18A59.5 59.5 0 0 1 750.09 213.75" stroke="#f9e204" stroke-width="8.2" fill="none"/>
<path d="M749.48 213.61A59.5 59.5 0 0 1 752.18 214.28" stroke="#f9e105" stroke-width="8.2" fill="none"/>
<path d="M751.58 214.12A59.5 59.5 0 0 1 754.26 214.88" stroke="#f9e006" stroke-width="8.2" fill="none"/>
<path d="M753.66 214.70A59.5 59.5 0 0 1 756.31 215.56" stroke="#fadf06" stroke-width="8.2" fill="none"/>
<path d="M755.73 215.36A59.5 59.5 0 0 1 758.34 216.31" stroke="#fade07" stroke-width="8.2" fill="none"/>
<path d="M757.76 216.09A59.5 59.5 0 0 1 760.34 217.14" stroke="#fadd08" stroke-width="8.2" fill="none"/>
<path d="M759.77 216.90A59.5 59.5 0 0 1 762.31 218.04" stroke="#fadc09" stroke-width="8.2" fill="none"/>
<path d="M761.75 217.77A59.5 59.5 0 0 1 764.24 219.01" stroke="#fadb09" stroke-width="8.2" fill="none"/>
<path d="M763.69 218.72A59.5 59.5 0 0 1 766.14 220.05" stroke="#fada0a" stroke-width="8.2" fill="none"/>
<path d="M765.60 219.74A59.5 59.5 0 0 1 768.00 221.16" stroke="#fbd90b" stroke-width="8.2" fill="none"/>
<path d="M767.47 220.83A59.5 59.5 0 0 1 769.81 222.33" stroke="#fbd80b" stroke-width="8.2" fill="none"/>
<path d="M769.30 221.99A59.5 59.5 0 0 1 771.59 223.57" stroke="#fbd70c" stroke-width="8.2" fill="none"/>
<path d="M771.08 223.21A59.5 59.5 0 0 1 773.31 224.88" stroke="#fbd60d" stroke-width="8.2" fill="none"/>
<path d="M772.82 224.50A59.5 59.5 0 0 1 774.99 226.24" stroke="#fbd50e" stroke-width="8.2" fill="none"/>
<path d="M774.51 225.84A59.5 59.5 0 0 1 776.62 227.67" stroke="#fcd40e" stroke-width="8.2" fill="none"/>
<path d="M776.16 227.25A59.5 59.5 0 0 1 778.19 229.15" stroke="#fcd30f" stroke-width="8.2" fill="none"/>
<path d="M777.75 228.72A59.5 59.5 0 0 1 779.71 230.69" stroke="#fcd210" stroke-width="8.2" fill="none"/>
<path d="M779.28 230.24A59.5 59.5 0 0 1 781.17 232.29" stroke="#fcd011" stroke-width="8.2" fill="none"/>
<path d="M780.76 231.82A59.5 59.5 0 0 1 782.58 233.93" stroke="#fccd13" stroke-width="8.2" fill="none"/>
<path d="M782.18 233.45A59.5 59.5 0 0 1 783.92 235.63" stroke="#fcca14" stroke-width="8.2" fill="none"/>
<path d="M783.54 235.14A59.5 59.5 0 0 1 785.20 237.37" stroke="#fcc816" stroke-width="8.2" fill="none"/>
<path d="M784.84 236.87A59.5 59.5 0 0 1 786.42 239.16" stroke="#fcc517" stroke-width="8.2" fill="none"/>
<path d="M786.07 238.64A59.5 59.5 0 0 1 787.57 241.00" stroke="#fdc219" stroke-width="8.2" fill="none"/>
<path d="M787.24 240.46A59.5 59.5 0 0 1 788.65 242.87" stroke="#fdbf1a" stroke-width="8.2" fill="none"/>
<path d="M788.34 242.33A59.5 59.5 0 0 1 789.66 244.78" stroke="#fdbd1c" stroke-width="8.2" fill="none"/>
<path d="M789.38 244.23A59.5 59.5 0 0 1 790.61 246.73" stroke="#fdba1d" stroke-width="8.2" fill="none"/>
<path d="M790.34 246.16A59.5 59.5 0 0 1 791.48 248.71" stroke="#fdb71f" stroke-width="8.2" fill="none"/>
<path d="M791.23 248.13A59.5 59.5 0 0 1 792.28 250.72" stroke="#fdb520" stroke-width="8.2" fill="none"/>
<path d="M792.05 250.13A59.5 59.5 0 0 1 793.00 252.75" stroke="#fdb222" stroke-width="8.2" fill="none"/>
<path d="M792.80 252.17A59.5 59.5 0 0 1 793.65 254.82" stroke="#fdaf23" stroke-width="8.2" fill="none"/>
<path d="M793.47 254.22A59.5 59.5 0 0 1 794.23 256.90" stroke="#fdad25" stroke-width="8.2" fill="none"/>
<path d="M794.07 256.30A59.5 59.5 0 0 1 794.73 259.01" stroke="#fdaa26" stroke-width="8.2" fill="none"/>
<path d="M794.59 258.40A59.5 59.5 0 0 1 795.15 261.13" stroke="#fda728" stroke-width="8.2" fill="none"/>
<path d="M795.04 260.52A59.5 59.5 0 0 1 795.50 263.26" stroke="#fea529" stroke-width="8.2" fill="none"/>
<path d="M795.41 262.65A59.5 59.5 0 0 1 795.77 265.41" stroke="#fea22b" stroke-width="8.2" fill="none"/>
<path d="M795.70 264.79A59.5 59.5 0 0 1 795.96 267.57" stroke="#fe9f2c" stroke-width="8.2" fill="none"/>
<path d="M795.91 266.95A59.5 59.5 0 0 1 796.07 269.73" stroke="#fe9d2d" stroke-width="8.2" fill="none"/>
<path d="M796.04 269.10A59.5 59.5 0 0 1 796.10 271.89" stroke="#fe9a2f" stroke-width="8.2" fill="none"/>
<path d="M796.10 271.27A59.5 59.5 0 0 1 796.05 274.05" stroke="#fe9730" stroke-width="8.2" fill="none"/>
<path d="M796.07 273.43A59.5 59.5 0 0 1 795.93 276.21" stroke="#fe9431" stroke-width="8.2" fill="none"/>
<path d="M795.97 275.59A59.5 59.5 0 0 1 795.73 278.37" stroke="#fd9131" stroke-width="8.2" fill="none"/>
<path d="M795.79 277.75A59.5 59.5 0 0 1 795.44 280.51" stroke="#fd8e31" stroke-width="8.2" fill="none"/>
<path d="M795.53 279.90A59.5 59.5 0 0 1 795.08 282.65" stroke="#fc8b32" stroke-width="8.2" fill="none"/>
<path d="M795.20 282.03A59.5 59.5 0 0 1 794.65 284.76" stroke="#fc8832" stroke-width="8.2" fill="none"/>
<path d="M794.78 284.16A59.5 59.5 0 0 1 794.13 286.87" stroke="#fc8433" stroke-width="8.2" fill="none"/>
<path d="M794.29 286.26A59.5 59.5 0 0 1 793.55 288.95" stroke="#fb8133" stroke-width="8.2" fill="none"/>
<path d="M793.72 288.35A59.5 59.5 0 0 1 792.88 291.01" stroke="#fb7e33" stroke-width="8.2" fill="none"/>
<path d="M793.08 290.42A59.5 59.5 0 0 1 792.14 293.04" stroke="#fb7b34" stroke-width="8.2" fill="none"/>
<path d="M792.36 292.46A59.5 59.5 0 0 1 791.33 295.04" stroke="#fa7834" stroke-width="8.2" fill="none"/>
<path d="M791.57 294.47A59.5 59.5 0 0 1 790.44 297.02" stroke="#fa7535" stroke-width="8.2" fill="none"/>
<path d="M790.71 296.45A59.5 59.5 0 0 1 789.49 298.96" stroke="#fa7235" stroke-width="8.2" fill="none"/>
<path d="M789.77 298.40A59.5 59.5 0 0 1 788.46 300.86" stroke="#f96f36" stroke-width="8.2" fill="none"/>
<path d="M788.77 300.32A59.5 59.5 0 0 1 787.37 302.73" stroke="#f96c36" stroke-width="8.2" fill="none"/>
<path d="M787.69 302.20A59.5 59.5 0 0 1 786.21 304.55" stroke="#f96936" stroke-width="8.2" fill="none"/>
<path d="M786.55 304.03A59.5 59.5 0 0 1 785.34 305.83" stroke="#f86637" stroke-width="8.2" fill="none"/>
<line x1="692.04" y1="302.90" x2="694.09" y2="301.47" stroke="#d8d8d8" stroke-width="0.8"/>
<line x1="683.03" y1="281.15" x2="685.49" y2="280.71" stroke="#d8d8d8" stroke-width="0.8"/>
<line x1="684.05" y1="257.62" x2="686.47" y2="258.27" stroke="#d8d8d8" stroke-width="0.8"/>
<line x1="694.93" y1="236.73" x2="696.84" y2="238.34" stroke="#d8d8d8" stroke-width="0.8"/>
<line x1="713.61" y1="222.40" x2="714.67" y2="224.66" stroke="#d8d8d8" stroke-width="0.8"/>
<line x1="736.60" y1="217.30" x2="736.60" y2="219.80" stroke="#d8d8d8" stroke-width="0.8"/>
<line x1="759.59" y1="222.40" x2="758.53" y2="224.66" stroke="#d8d8d8" stroke-width="0.8"/>
<line x1="778.27" y1="236.73" x2="776.36" y2="238.34" stroke="#d8d8d8" stroke-width="0.8"/>
<line x1="789.15" y1="257.62" x2="786.73" y2="258.27" stroke="#d8d8d8" stroke-width="0.8"/>
<line x1="790.17" y1="281.15" x2="787.71" y2="280.71" stroke="#d8d8d8" stroke-width="0.8"/>
<line x1="781.16" y1="302.90" x2="779.11" y2="301.47" stroke="#d8d8d8" stroke-width="0.8"/>
<text transform="translate(695.81,297.96) scale(0.9,1)" x="0" y="0" text-anchor="start" dominant-baseline="central" class="gl">0</text>
<text transform="translate(688.50,256.71) scale(0.9,1)" x="0" y="0" text-anchor="start" dominant-baseline="central" class="gl">20</text>
<text transform="translate(715.55,225.17) scale(0.9,1)" x="0" y="0" text-anchor="start" dominant-baseline="hanging" class="gl">40</text>
<text transform="translate(757.65,225.17) scale(0.9,1)" x="0" y="0" text-anchor="end" dominant-baseline="hanging" class="gl">60</text>
<text transform="translate(784.70,256.71) scale(0.9,1)" x="0" y="0" text-anchor="end" dominant-baseline="central" class="gl">80</text>
<text transform="translate(777.39,297.96) scale(0.9,1)" x="0" y="0" text-anchor="end" dominant-baseline="central" class="gl">100</text>
<defs><linearGradient id="pg3" gradientUnits="userSpaceOnUse" x1="727.68" y1="236.31" x2="737.46" y2="275.09"><stop offset="0" stop-color="#e4ea50" stop-opacity="0.5"/><stop offset="0.55" stop-color="#8fd052"/><stop offset="1" stop-color="#45b08c"/></linearGradient></defs>
<path d="M727.68 236.31L738.81 271.87L737.46 275.09L734.73 272.89Z" fill="url(#pg3)"/>
<text x="736.60" y="295.80" text-anchor="middle" dominant-baseline="central" class="gv" textLength="39" lengthAdjust="spacingAndGlyphs">44.34%</text>
<text x="736.60" y="194.70" text-anchor="middle" dominant-baseline="central" class="gt">内存使用率</text>
<path d="M911.56 305.83A59.5 59.5 0 0 1 910.02 303.51" stroke="#39b375" stroke-width="8.2" fill="none"/>
<path d="M910.35 304.03A59.5 59.5 0 0 1 908.89 301.66" stroke="#3eb472" stroke-width="8.2" fill="none"/>
<path d="M909.21 302.20A59.5 59.5 0 0 1 907.84 299.77" stroke="#42b570" stroke-width="8.2" fill="none"/>
<path d="M908.13 300.32A59.5 59.5 0 0 1 906.85 297.85" stroke="#46b76d" stroke-width="8.2" fill="none"/>
<path d="M907.13 298.40A59.5 59.5 0 0 1 905.94 295.89" stroke="#4bb86b" stroke-width="8.2" fill="none"/>
<path d="M906.19 296.45A59.5 59.5 0 0 1 905.09 293.89" stroke="#4fb968" stroke-width="8.2" fill="none"/>
<path d="M905.33 294.47A59.5 59.5 0 0 1 904.32 291.87" stroke="#53bb66" stroke-width="8.2" fill="none"/>
<path d="M904.54 292.46A59.5 59.5 0 0 1 903.63 289.82" stroke="#58bc63" stroke-width="8.2" fill="none"/>
<path d="M903.82 290.42A59.5 59.5 0 0 1 903.01 287.75" stroke="#5cbd61" stroke-width="8.2" fill="none"/>
<path d="M903.18 288.35A59.5 59.5 0 0 1 902.46 285.66" stroke="#60be5e" stroke-width="8.2" fill="none"/>
<path d="M902.61 286.26A59.5 59.5 0 0 1 901.99 283.55" stroke="#65c05c" stroke-width="8.2" fill="none"/>
<path d="M902.12 284.16A59.5 59.5 0 0 1 901.60 281.42" stroke="#69c159" stroke-width="8.2" fill="none"/>
<path d="M901.70 282.03A59.5 59.5 0 0 1 901.28 279.28" stroke="#6dc257" stroke-width="8.2" fill="none"/>
<path d="M901.37 279.90A59.5 59.5 0 0 1 901.05 277.13" stroke="#72c454" stroke-width="8.2" fill="none"/>
<path d="M901.11 277.75A59.5 59.5 0 0 1 900.89 274.97" stroke="#76c552" stroke-width="8.2" fill="none"/>
<path d="M900.93 275.59A59.5 59.5 0 0 1 900.81 272.81" stroke="#7ac64f" stroke-width="8.2" fill="none"/>
<path d="M900.83 273.43A59.5 59.5 0 0 1 900.81 270.64" stroke="#7fc84d" stroke-width="8.2" fill="none"/>
<path d="M900.80 271.27A59.5 59.5 0 0 1 900.89 268.48" stroke="#83c94a" stroke-width="8.2" fill="none"/>
<path d="M900.86 269.10A59.5 59.5 0 0 1 901.04 266.32" stroke="#86ca47" stroke-width="8.2" fill="none"/>
<path d="M900.99 266.95A59.5 59.5 0 0 1 901.28 264.17" stroke="#8acc44" stroke-width="8.2" fill="none"/>
<path d="M901.20 264.79A59.5 59.5 0 0 1 901.59 262.03" stroke="#8ecd42" stroke-width="8.2" fill="none"/>
<path d="M901.49 262.65A59.5 59.5 0 0 1 901.98 259.91" stroke="#91ce3f" stroke-width="8.2" fill="none"/>
<path d="M901.86 260.52A59.5 59.5 0 0 1 902.45 257.79" stroke="#95cf3c" stroke-width="8.2" fill="none"/>
<path d="M902.31 258.40A59.5 59.5 0 0 1 902.99 255.70" stroke="#99d139" stroke-width="8.2" fill="none"/>
<path d="M902.83 256.30A59.5 59.5 0 0 1 903.61 253.63" stroke="#9cd236" stroke-width="8.2" fill="none"/>
<path d="M903.43 254.22A59.5 59.5 0 0 1 904.31 251.58" stroke="#a0d333" stroke-width="8.2" fill="none"/>
<path d="M904.10 252.17A59.5 59.5 0 0 1 905.07 249.56" stroke="#a3d531" stroke-width="8.2" fill="none"/>
<path d="M904.85 250.13A59.5 59.5 0 0 1 905.92 247.56" stroke="#a7d62e" stroke-width="8.2" fill="none"/>
<path d="M905.67 248.13A59.5 59.5 0 0 1 906.83 245.60" stroke="#abd72b" stroke-width="8.2" fill="none"/>
<path d="M906.56 246.16A59.5 59.5 0 0 1 907.81 243.67" stroke="#aed828" stroke-width="8.2" fill="none"/>
<path d="M907.52 244.23A59.5 59.5 0 0 1 908.87 241.79" stroke="#b2da25" stroke-width="8.2" fill="none"/>
<path d="M908.56 242.33A59.5 59.5 0 0 1 909.99 239.94" stroke="#b6db22" stroke-width="8.2" fill="none"/>
<path d="M909.66 240.46A59.5 59.5 0 0 1 911.18 238.13" stroke="#b9dc20" stroke-width="8.2" fill="none"/>
<path d="M910.83 238.64A59.5 59.5 0 0 1 912.43 236.36" stroke="#bdde1d" stroke-width="8.2" fill="none"/>
<path d="M912.06 236.87A59.5 59.5 0 0 1 913.75 234.65" stroke="#c1df1a" stroke-width="8.2" fill="none"/>
<path d="M913.36 235.14A59.5 59.5 0 0 1 915.12 232.98" stroke="#c4e017" stroke-width="8.2" fill="none"/>
<path d="M914.72 233.45A59.5 59.5 0 0 1 916.56 231.36" stroke="#c8e214" stroke-width="8.2" fill="none"/>
<path d="M916.14 231.82A59.5 59.5 0 0 1 918.06 229.80" stroke="#cce312" stroke-width="8.2" fill="none"/>
<path d="M917.62 230.24A59.5 59.5 0 0 1 919.61 228.29" stroke="#cfe40f" stroke-width="8.2" fill="none"/>
<path d="M919.15 228.72A59.5 59.5 0 0 1 921.21 226.84" stroke="#d1e40e" stroke-width="8.2" fill="none"/>
<path d="M920.74 227.25A59.5 59.5 0 0 1 922.87 225.45" stroke="#d3e40e" stroke-width="8.2" fill="none"/>
<path d="M922.39 225.84A59.5 59.5 0 0 1 924.57 224.12" stroke="#d5e50d" stroke-width="8.2" fill="none"/>
<path d="M924.08 224.50A59.5 59.5 0 0 1 926.33 222.85" stroke="#d7e50c" stroke-width="8.2" fill="none"/>
<path d="M925.82 223.21A59.5 59.5 0 0 1 928.13 221.65" stroke="#d9e50b" stroke-width="8.2" fill="none"/>
<path d="M927.60 221.99A59.5 59.5 0 0 1 929.97 220.51" stroke="#dbe50b" stroke-width="8.2" fill="none"/>
<path d="M929.43 220.83A59.5 59.5 0 0 1 931.85 219.44" stroke="#dce50a" stroke-width="8.2" fill="none"/>
<path d="M931.30 219.74A59.5 59.5 0 0 1 933.77 218.44" stroke="#dee609" stroke-width="8.2" fill="none"/>
<path d="M933.21 218.72A59.5 59.5 0 0 1 935.72 217.51" stroke="#e0e609" stroke-width="8.2" fill="none"/>
<path d="M935.15 217.77A59.5 59.5 0 0 1 937.71 216.66" stroke="#e2e608" stroke-width="8.2" fill="none"/>
<path d="M937.13 216.90A59.5 59.5 0 0 1 939.72 215.87" stroke="#e4e607" stroke-width="8.2" fill="none"/>
<path d="M939.14 216.09A59.5 59.5 0 0 1 941.77 215.16" stroke="#e6e607" stroke-width="8.2" fill="none"/>
<path d="M941.17 215.36A59.5 59.5 0 0 1 943.83 214.52" stroke="#e8e606" stroke-width="8.2" fill="none"/>
<path d="M943.24 214.70A59.5 59.5 0 0 1 945.92 213.96" stroke="#eae705" stroke-width="8.2" fill="none"/>
<path d="M945.32 214.12A59.5 59.5 0 0 1 948.03 213.48" stroke="#ece705" stroke-width="8.2" fill="none"/>
<path d="M947.42 213.61A59.5 59.5 0 0 1 950.16 213.07" stroke="#eee704" stroke-width="8.2" fill="none"/>
<path d="M949.54 213.18A59.5 59.5 0 0 1 952.29 212.74" stroke="#efe703" stroke-width="8.2" fill="none"/>
<path d="M951.68 212.83A59.5 59.5 0 0 1 954.44 212.49" stroke="#f1e702" stroke-width="8.2" fill="none"/>
<path d="M953.82 212.55A59.5 59.5 0 0 1 956.60 212.32" stroke="#f3e802" stroke-width="8.2" fill="none"/>
<path d="M955.98 212.36A59.5 59.5 0 0 1 958.76 212.22" stroke="#f5e801" stroke-width="8.2" fill="none"/>
<path d="M958.14 212.24A59.5 59.5 0 0 1 960.92 212.20" stroke="#f7e800" stroke-width="8.2" fill="none"/>
<path d="M960.30 212.20A59.5 59.5 0 0 1 963.09 212.27" stroke="#f8e700" stroke-width="8.2" fill="none"/>
<path d="M962.46 212.24A59.5 59.5 0 0 1 965.24 212.41" stroke="#f8e601" stroke-width="8.2" fill="none"/>
<path d="M964.62 212.36A59.5 59.5 0 0 1 967.40 212.62" stroke="#f8e502" stroke-width="8.2" fill="none"/>
<path d="M966.78 212.55A59.5 59.5 0 0 1 969.54 212.92" stroke="#f9e403" stroke-width="8.2" fill="none"/>
<path d="M968.92 212.83A59.5 59.5 0 0 1 971.67 213.30" stroke="#f9e303" stroke-width="8.2" fill="none"/>
<path d="M971.06 213.18A59.5 59.5 0 0 1 973.79 213.75" stroke="#f9e204" stroke-width="8.2" fill="none"/>
<path d="M973.18 213.61A59.5 59.5 0 0 1 975.88 214.28" stroke="#f9e105" stroke-width="8.2" fill="none"/>
<path d="M975.28 214.12A59.5 59.5 0 0 1 977.96 214.88" stroke="#f9e006" stroke-width="8.2" fill="none"/>
<path d="M977.36 214.70A59.5 59.5 0 0 1 980.01 215.56" stroke="#fadf06" stroke-width="8.2" fill="none"/>
<path d="M979.43 215.36A59.5 59.5 0 0 1 982.04 216.31" stroke="#fade07" stroke-width="8.2" fill="none"/>
<path d="M981.46 216.09A59.5 59.5 0 0 1 984.04 217.14" stroke="#fadd08" stroke-width="8.2" fill="none"/>
<path d="M983.47 216.90A59.5 59.5 0 0 1 986.01 218.04" stroke="#fadc09" stroke-width="8.2" fill="none"/>
<path d="M985.45 217.77A59.5 59.5 0 0 1 987.94 219.01" stroke="#fadb09" stroke-width="8.2" fill="none"/>
<path d="M987.39 218.72A59.5 59.5 0 0 1 989.84 220.05" stroke="#fada0a" stroke-width="8.2" fill="none"/>
<path d="M989.30 219.74A59.5 59.5 0 0 1 991.70 221.16" stroke="#fbd90b" stroke-width="8.2" fill="none"/>
<path d="M991.17 220.83A59.5 59.5 0 0 1 993.51 222.33" stroke="#fbd80b" stroke-width="8.2" fill="none"/>
<path d="M993.00 221.99A59.5 59.5 0 0 1 995.29 223.57" stroke="#fbd70c" stroke-width="8.2" fill="none"/>
<path d="M994.78 223.21A59.5 59.5 0 0 1 997.01 224.88" stroke="#fbd60d" stroke-width="8.2" fill="none"/>
<path d="M996.52 224.50A59.5 59.5 0 0 1 998.69 226.24" stroke="#fbd50e" stroke-width="8.2" fill="none"/>
<path d="M998.21 225.84A59.5 59.5 0 0 1 1000.32 227.67" stroke="#fcd40e" stroke-width="8.2" fill="none"/>
<path d="M999.86 227.25A59.5 59.5 0 0 1 1001.89 229.15" stroke="#fcd30f" stroke-width="8.2" fill="none"/>
<path d="M1001.45 228.72A59.5 59.5 0 0 1 1003.41 230.69" stroke="#fcd210" stroke-width="8.2" fill="none"/>
<path d="M1002.98 230.24A59.5 59.5 0 0 1 1004.87 232.29" stroke="#fcd011" stroke-width="8.2" fill="none"/>
<path d="M1004.46 231.82A59.5 59.5 0 0 1 1006.28 233.93" stroke="#fccd13" stroke-width="8.2" fill="none"/>
<path d="M1005.88 233.45A59.5 59.5 0 0 1 1007.62 235.63" stroke="#fcca14" stroke-width="8.2" fill="none"/>
<path d="M1007.24 235.14A59.5 59.5 0 0 1 1008.90 237.37" stroke="#fcc816" stroke-width="8.2" fill="none"/>
<path d="M1008.54 236.87A59.5 59.5 0 0 1 1010.12 239.16" stroke="#fcc517" stroke-width="8.2" fill="none"/>
<path d="M1009.77 238.64A59.5 59.5 0 0 1 1011.27 241.00" stroke="#fdc219" stroke-width="8.2" fill="none"/>
<path d="M1010.94 240.46A59.5 59.5 0 0 1 1012.35 242.87" stroke="#fdbf1a" stroke-width="8.2" fill="none"/>
<path d="M1012.04 242.33A59.5 59.5 0 0 1 1013.36 244.78" stroke="#fdbd1c" stroke-width="8.2" fill="none"/>
<path d="M1013.08 244.23A59.5 59.5 0 0 1 1014.31 246.73" stroke="#fdba1d" stroke-width="8.2" fill="none"/>
<path d="M1014.04 246.16A59.5 59.5 0 0 1 1015.18 248.71" stroke="#fdb71f" stroke-width="8.2" fill="none"/>
<path d="M1014.93 248.13A59.5 59.5 0 0 1 1015.98 250.72" stroke="#fdb520" stroke-width="8.2" fill="none"/>
<path d="M1015.75 250.13A59.5 59.5 0 0 1 1016.70 252.75" stroke="#fdb222" stroke-width="8.2" fill="none"/>
<path d="M1016.50 252.17A59.5 59.5 0 0 1 1017.35 254.82" stroke="#fdaf23" stroke-width="8.2" fill="none"/>
<path d="M1017.17 254.22A59.5 59.5 0 0 1 1017.93 256.90" stroke="#fdad25" stroke-width="8.2" fill="none"/>
<path d="M1017.77 256.30A59.5 59.5 0 0 1 1018.43 259.01" stroke="#fdaa26" stroke-width="8.2" fill="none"/>
<path d="M1018.29 258.40A59.5 59.5 0 0 1 1018.85 261.13" stroke="#fda728" stroke-width="8.2" fill="none"/>
<path d="M1018.74 260.52A59.5 59.5 0 0 1 1019.20 263.26" stroke="#fea529" stroke-width="8.2" fill="none"/>
<path d="M1019.11 262.65A59.5 59.5 0 0 1 1019.47 265.41" stroke="#fea22b" stroke-width="8.2" fill="none"/>
<path d="M1019.40 264.79A59.5 59.5 0 0 1 1019.66 267.57" stroke="#fe9f2c" stroke-width="8.2" fill="none"/>
<path d="M1019.61 266.95A59.5 59.5 0 0 1 1019.77 269.73" stroke="#fe9d2d" stroke-width="8.2" fill="none"/>
<path d="M1019.74 269.10A59.5 59.5 0 0 1 1019.80 271.89" stroke="#fe9a2f" stroke-width="8.2" fill="none"/>
<path d="M1019.80 271.27A59.5 59.5 0 0 1 1019.75 274.05" stroke="#fe9730" stroke-width="8.2" fill="none"/>
<path d="M1019.77 273.43A59.5 59.5 0 0 1 1019.63 276.21" stroke="#fe9431" stroke-width="8.2" fill="none"/>
<path d="M1019.67 275.59A59.5 59.5 0 0 1 1019.43 278.37" stroke="#fd9131" stroke-width="8.2" fill="none"/>
<path d="M1019.49 277.75A59.5 59.5 0 0 1 1019.14 280.51" stroke="#fd8e31" stroke-width="8.2" fill="none"/>
<path d="M1019.23 279.90A59.5 59.5 0 0 1 1018.78 282.65" stroke="#fc8b32" stroke-width="8.2" fill="none"/>
<path d="M1018.90 282.03A59.5 59.5 0 0 1 1018.35 284.76" stroke="#fc8832" stroke-width="8.2" fill="none"/>
<path d="M1018.48 284.16A59.5 59.5 0 0 1 1017.83 286.87" stroke="#fc8433" stroke-width="8.2" fill="none"/>
<path d="M1017.99 286.26A59.5 59.5 0 0 1 1017.25 288.95" stroke="#fb8133" stroke-width="8.2" fill="none"/>
<path d="M1017.42 288.35A59.5 59.5 0 0 1 1016.58 291.01" stroke="#fb7e33" stroke-width="8.2" fill="none"/>
<path d="M1016.78 290.42A59.5 59.5 0 0 1 1015.84 293.04" stroke="#fb7b34" stroke-width="8.2" fill="none"/>
<path d="M1016.06 292.46A59.5 59.5 0 0 1 1015.03 295.04" stroke="#fa7834" stroke-width="8.2" fill="none"/>
<path d="M1015.27 294.47A59.5 59.5 0 0 1 1014.14 297.02" stroke="#fa7535" stroke-width="8.2" fill="none"/>
<path d="M1014.41 296.45A59.5 59.5 0 0 1 1013.19 298.96" stroke="#fa7235" stroke-width="8.2" fill="none"/>
<path d="M1013.47 298.40A59.5 59.5 0 0 1 1012.16 300.86" stroke="#f96f36" stroke-width="8.2" fill="none"/>
<path d="M1012.47 300.32A59.5 59.5 0 0 1 1011.07 302.73" stroke="#f96c36" stroke-width="8.2" fill="none"/>
<path d="M1011.39 302.20A59.5 59.5 0 0 1 1009.91 304.55" stroke="#f96936" stroke-width="8.2" fill="none"/>
<path d="M1010.25 304.03A59.5 59.5 0 0 1 1009.04 305.83" stroke="#f86637" stroke-width="8.2" fill="none"/>
<line x1="915.74" y1="302.90" x2="917.79" y2="301.47" stroke="#d8d8d8" stroke-width="0.8"/>
<line x1="906.73" y1="281.15" x2="909.19" y2="280.71" stroke="#d8d8d8" stroke-width="0.8"/>
<line x1="907.75" y1="257.62" x2="910.17" y2="258.27" stroke="#d8d8d8" stroke-width="0.8"/>
<line x1="918.63" y1="236.73" x2="920.54" y2="238.34" stroke="#d8d8d8" stroke-width="0.8"/>
<line x1="937.31" y1="222.40" x2="938.37" y2="224.66" stroke="#d8d8d8" stroke-width="0.8"/>
<line x1="960.30" y1="217.30" x2="960.30" y2="219.80" stroke="#d8d8d8" stroke-width="0.8"/>
<line x1="983.29" y1="222.40" x2="982.23" y2="224.66" stroke="#d8d8d8" stroke-width="0.8"/>
<line x1="1001.97" y1="236.73" x2="1000.06" y2="238.34" stroke="#d8d8d8" stroke-width="0.8"/>
<line x1="1012.85" y1="257.62" x2="1010.43" y2="258.27" stroke="#d8d8d8" stroke-width="0.8"/>
<line x1="1013.87" y1="281.15" x2="1011.41" y2="280.71" stroke="#d8d8d8" stroke-width="0.8"/>
<line x1="1004.86" y1="302.90" x2="1002.81" y2="301.47" stroke="#d8d8d8" stroke-width="0.8"/>
<text transform="translate(919.51,297.96) scale(0.9,1)" x="0" y="0" text-anchor="start" dominant-baseline="central" class="gl">0</text>
<text transform="translate(912.20,256.71) scale(0.9,1)" x="0" y="0" text-anchor="start" dominant-baseline="central" class="gl">20</text>
<text transform="translate(939.25,225.17) scale(0.9,1)" x="0" y="0" text-anchor="start" dominant-baseline="hanging" class="gl">40</text>
<text transform="translate(981.35,225.17) scale(0.9,1)" x="0" y="0" text-anchor="end" dominant-baseline="hanging" class="gl">60</text>
<text transform="translate(1008.40,256.71) scale(0.9,1)" x="0" y="0" text-anchor="end" dominant-baseline="central" class="gl">80</text>
<text transform="translate(1001.09,297.96) scale(0.9,1)" x="0" y="0" text-anchor="end" dominant-baseline="central" class="gl">100</text>
<defs><linearGradient id="pg4" gradientUnits="userSpaceOnUse" x1="941.67" y1="240.32" x2="962.09" y2="274.71"><stop offset="0" stop-color="#e4ea50" stop-opacity="0.5"/><stop offset="0.55" stop-color="#8fd052"/><stop offset="1" stop-color="#45b08c"/></linearGradient></defs>
<path d="M941.67 240.32L962.46 271.23L962.09 274.71L958.85 273.37Z" fill="url(#pg4)"/>
<text x="960.30" y="295.80" text-anchor="middle" dominant-baseline="central" class="gv" textLength="38" lengthAdjust="spacingAndGlyphs">37.72%</text>
<text x="960.30" y="194.70" text-anchor="middle" dominant-baseline="central" class="gt">/</text></svg>

<div style="position:absolute;left:177px;top:164.5px;width:3.5px;height:11px;background:#409eff;border-radius:2px"></div>
<div class="abs" style="left:187.8px;top:165.30px;font-size:11px;color:#444;">状态信息</div>
<div class="abs" style="left:177.3px;top:379.30px;font-size:11px;color:#444;">基本信息</div>
<div class="sbtn" style="left:236px;top:376.3px;width:41px"><svg style="position:absolute;left:6px;top:4px" width="8" height="8" viewBox="0 0 8 8"><path d="M4.2 1.2H1V7H6.8V3.8" stroke="#409eff" stroke-width="0.8" fill="none"/><path d="M3.4 4.6L7 1" stroke="#409eff" stroke-width="0.8"/></svg><span style="position:absolute;left:17px;top:0.8px">修改</span></div>
<div class="abs" style="left:177.3px;top:498.60px;font-size:11px;color:#444;">操作系统</div>
<div class="sbtn" style="left:236.5px;top:495.2px;width:40.5px"><svg style="position:absolute;left:4.5px;top:3.4px" width="9" height="9" viewBox="0 0 9 9"><path d="M7.10 3.46 L8.02 3.76 L8.02 5.24 L7.10 5.54 L7.07 5.60 L7.52 6.47 L6.47 7.52 L5.60 7.07 L5.54 7.10 L5.24 8.02 L3.76 8.02 L3.46 7.10 L3.40 7.07 L2.53 7.52 L1.48 6.47 L1.93 5.60 L1.90 5.54 L0.98 5.24 L0.98 3.76 L1.90 3.46 L1.93 3.40 L1.48 2.53 L2.53 1.48 L3.40 1.93 L3.46 1.90 L3.76 0.98 L5.24 0.98 L5.54 1.90 L5.60 1.93 L6.47 1.48 L7.52 2.53 L7.07 3.40Z" stroke="#409eff" stroke-width="0.8" fill="none" stroke-linejoin="round"/><circle cx="4.5" cy="4.5" r="1.2" stroke="#409eff" stroke-width="0.8" fill="none"/></svg><span style="position:absolute;left:16.5px;top:0.8px">设置</span></div>
<div style="position:absolute;left:177.3px;top:404px;width:113.39999999999998px;height:28.5px;background:#f5f7fa;"></div>
<div class="abs" style="left:185.70000000000002px;top:414.05px;font-size:10px;color:#606266;">ID</div>
<div style="position:absolute;left:290.7px;top:404px;width:184.3px;height:28.5px;background:#fff;"></div>
<div class="abs" style="left:299.0px;top:414.05px;font-size:10px;color:#606266;">i-axldvaxs</div>
<div style="position:absolute;left:475px;top:404px;width:114.39999999999998px;height:28.5px;background:#f5f7fa;"></div>
<div class="abs" style="left:483.4px;top:414.05px;font-size:10px;color:#606266;">名称</div>
<div style="position:absolute;left:589.4px;top:404px;width:182.89999999999998px;height:28.5px;background:#fff;"></div>
<div class="abs" style="left:596.6px;top:414.05px;font-size:10px;color:#606266;">yops-server</div>
<div style="position:absolute;left:772.3px;top:404px;width:115.90000000000009px;height:28.5px;background:#f5f7fa;"></div>
<div class="abs" style="left:781.3px;top:414.05px;font-size:10px;color:#606266;">运行状态</div>
<div style="position:absolute;left:888.2px;top:404px;width:183.29999999999995px;height:28.5px;background:#fff;"></div>
<div class="abs" style="left:895.0px;top:414.05px;font-size:10px;color:#606266;">运行中</div>
<div style="position:absolute;left:177.3px;top:432.5px;width:113.39999999999998px;height:28.5px;background:#f5f7fa;"></div>
<div style="position:absolute;left:290.7px;top:432.5px;width:780.8px;height:28.5px;background:#fff;"></div>
<div class="abs" style="left:185.70000000000002px;top:442.55px;font-size:10px;color:#606266;">备注</div>
<div class="abs" style="left:298.7px;top:442.55px;font-size:10px;color:#606266;">系统自动创建</div>
<div style="position:absolute;left:177.3px;top:522.5px;width:113.39999999999998px;height:28.5px;background:#f5f7fa;"></div>
<div class="abs" style="left:185.70000000000002px;top:532.55px;font-size:10px;color:#606266;">Hostname</div>
<div style="position:absolute;left:290.7px;top:522.5px;width:184.3px;height:28.5px;background:#fff;"></div>
<div class="abs" style="left:299.0px;top:532.55px;font-size:10px;color:#606266;">yops</div>
<div style="position:absolute;left:475px;top:522.5px;width:114.39999999999998px;height:28.5px;background:#f5f7fa;"></div>
<div class="abs" style="left:483.4px;top:532.55px;font-size:10px;color:#606266;">SSH 端口</div>
<div style="position:absolute;left:589.4px;top:522.5px;width:182.89999999999998px;height:28.5px;background:#fff;"></div>
<div class="abs" style="left:596.6px;top:532.55px;font-size:10px;color:#606266;">22</div>
<div style="position:absolute;left:772.3px;top:522.5px;width:115.90000000000009px;height:28.5px;background:#f5f7fa;"></div>
<div class="abs" style="left:781.3px;top:532.55px;font-size:10px;color:#606266;">IP</div>
<div style="position:absolute;left:888.2px;top:522.5px;width:183.29999999999995px;height:28.5px;background:#fff;"></div>
<div class="abs" style="left:895.0px;top:532.55px;font-size:10px;color:#606266;">192.168.1.10</div>
<div style="position:absolute;left:177.3px;top:551.0px;width:113.39999999999998px;height:44px;background:#f5f7fa;"></div>
<div class="abs" style="left:185.70000000000002px;top:568.80px;font-size:10px;color:#606266;">CPU数量</div>
<div style="position:absolute;left:290.7px;top:551.0px;width:184.3px;height:44px;background:#fff;"></div>
<div class="abs" style="left:299.0px;top:568.80px;font-size:10px;color:#606266;">2</div>
<div style="position:absolute;left:475px;top:551.0px;width:114.39999999999998px;height:44px;background:#f5f7fa;"></div>
<div class="abs" style="left:483.4px;top:568.80px;font-size:10px;color:#606266;">CPU核心数</div>
<div style="position:absolute;left:589.4px;top:551.0px;width:182.89999999999998px;height:44px;background:#fff;"></div>
<div class="abs" style="left:596.6px;top:568.80px;font-size:10px;color:#606266;">2</div>
<div style="position:absolute;left:772.3px;top:551.0px;width:115.90000000000009px;height:44px;background:#f5f7fa;"></div>
<div class="abs" style="left:781.3px;top:568.80px;font-size:10px;color:#606266;">CPU型号</div>
<div style="position:absolute;left:888.2px;top:551.0px;width:183.29999999999995px;height:44px;background:#fff;"></div>
<div class="abs" style="left:895.0px;top:560.80px;font-size:10px;color:#606266;">13th Gen Intel(R) Core(TM) i5-</div>
<div class="abs" style="left:895.0px;top:576.80px;font-size:10px;color:#606266;">13500H</div>
<div style="position:absolute;left:290.7px;top:550.5px;width:184.3px;height:1px;background:#f0f2f5;"></div>
<div style="position:absolute;left:589.4px;top:550.5px;width:182.89999999999998px;height:1px;background:#f0f2f5;"></div>
<div style="position:absolute;left:888.2px;top:550.5px;width:183.29999999999995px;height:1px;background:#f0f2f5;"></div>
<div style="position:absolute;left:290.7px;top:594.5px;width:184.3px;height:1px;background:#f0f2f5;"></div>
<div style="position:absolute;left:589.4px;top:594.5px;width:182.89999999999998px;height:1px;background:#f0f2f5;"></div>
<div style="position:absolute;left:888.2px;top:594.5px;width:183.29999999999995px;height:1px;background:#f0f2f5;"></div>

<div style="position:absolute;left:1093px;top:73.2px;width:5px;height:460.8px;background:#a8a8ab;border-radius:1px 1px 0 0"></div>
<div style="position:absolute;left:1093px;top:534px;width:5px;height:65px;background:#e6e7ea"></div>
<div style="position:absolute;left:812.5px;top:350.5px;width:280px;height:212.5px;background:#fff;border-radius:3px;box-shadow:0 1px 6px rgba(0,0,0,0.12)"></div>
<div style="position:absolute;left:955px;top:346.5px;width:0;height:0;border-left:4.5px solid transparent;border-right:4.5px solid transparent;border-bottom:4.5px solid #fff"></div>
<div class="abs" style="left:821px;top:363.30px;font-size:10px;color:#333;font-weight:bold">磁盘利用率</div>
<div style="position:absolute;left:821px;top:386px;width:71px;height:28px;background:#f5f7fa;"></div>
<div style="position:absolute;left:892px;top:386px;width:192px;height:28px;background:#fff;"></div>
<div style="position:absolute;left:892px;top:413.5px;width:192px;height:1px;background:#f0f2f5;"></div>
<div class="abs" style="left:829px;top:395.80px;font-size:10px;color:#606266;">挂载点</div>
<div class="abs" style="left:900px;top:395.80px;font-size:10px;color:#606266;">/</div>
<div style="position:absolute;left:821px;top:414px;width:71px;height:28px;background:#f5f7fa;"></div>
<div style="position:absolute;left:892px;top:414px;width:192px;height:28px;background:#fff;"></div>
<div style="position:absolute;left:892px;top:441.5px;width:192px;height:1px;background:#f0f2f5;"></div>
<div class="abs" style="left:829px;top:423.80px;font-size:10px;color:#606266;">文件系统</div>
<div class="abs" style="left:900px;top:423.80px;font-size:10px;color:#606266;">/dev/mapper/ubuntu--vg-ubuntu--lv</div>
<div style="position:absolute;left:821px;top:442px;width:71px;height:28px;background:#f5f7fa;"></div>
<div style="position:absolute;left:892px;top:442px;width:192px;height:28px;background:#fff;"></div>
<div style="position:absolute;left:892px;top:469.5px;width:192px;height:1px;background:#f0f2f5;"></div>
<div class="abs" style="left:829px;top:451.80px;font-size:10px;color:#606266;">类型</div>
<div class="abs" style="left:900px;top:451.80px;font-size:10px;color:#606266;">ext4</div>
<div style="position:absolute;left:821px;top:470px;width:71px;height:28px;background:#f5f7fa;"></div>
<div style="position:absolute;left:892px;top:470px;width:192px;height:28px;background:#fff;"></div>
<div style="position:absolute;left:892px;top:497.5px;width:192px;height:1px;background:#f0f2f5;"></div>
<div class="abs" style="left:829px;top:479.80px;font-size:10px;color:#606266;">已使用</div>
<div class="abs" style="left:900px;top:479.80px;font-size:10px;color:#606266;">6.62G</div>
<div style="position:absolute;left:821px;top:498px;width:71px;height:28px;background:#f5f7fa;"></div>
<div style="position:absolute;left:892px;top:498px;width:192px;height:28px;background:#fff;"></div>
<div style="position:absolute;left:892px;top:525.5px;width:192px;height:1px;background:#f0f2f5;"></div>
<div class="abs" style="left:829px;top:507.80px;font-size:10px;color:#606266;">总容量</div>
<div class="abs" style="left:900px;top:507.80px;font-size:10px;color:#606266;">17.55G</div>
<div style="position:absolute;left:821px;top:526px;width:71px;height:28px;background:#f5f7fa;"></div>
<div style="position:absolute;left:892px;top:526px;width:192px;height:28px;background:#fff;"></div>
<div style="position:absolute;left:892px;top:553.5px;width:192px;height:1px;background:#f0f2f5;"></div>
<div class="abs" style="left:829px;top:535.80px;font-size:10px;color:#606266;">使用率</div>
<div class="abs" style="left:900px;top:535.80px;font-size:10px;color:#606266;">37.72%</div>
<div style="position:absolute;left:790px;top:183.5px;width:303px;height:390px;border:1.6px solid #dd5555;border-radius:2px"></div>
</body></html>
